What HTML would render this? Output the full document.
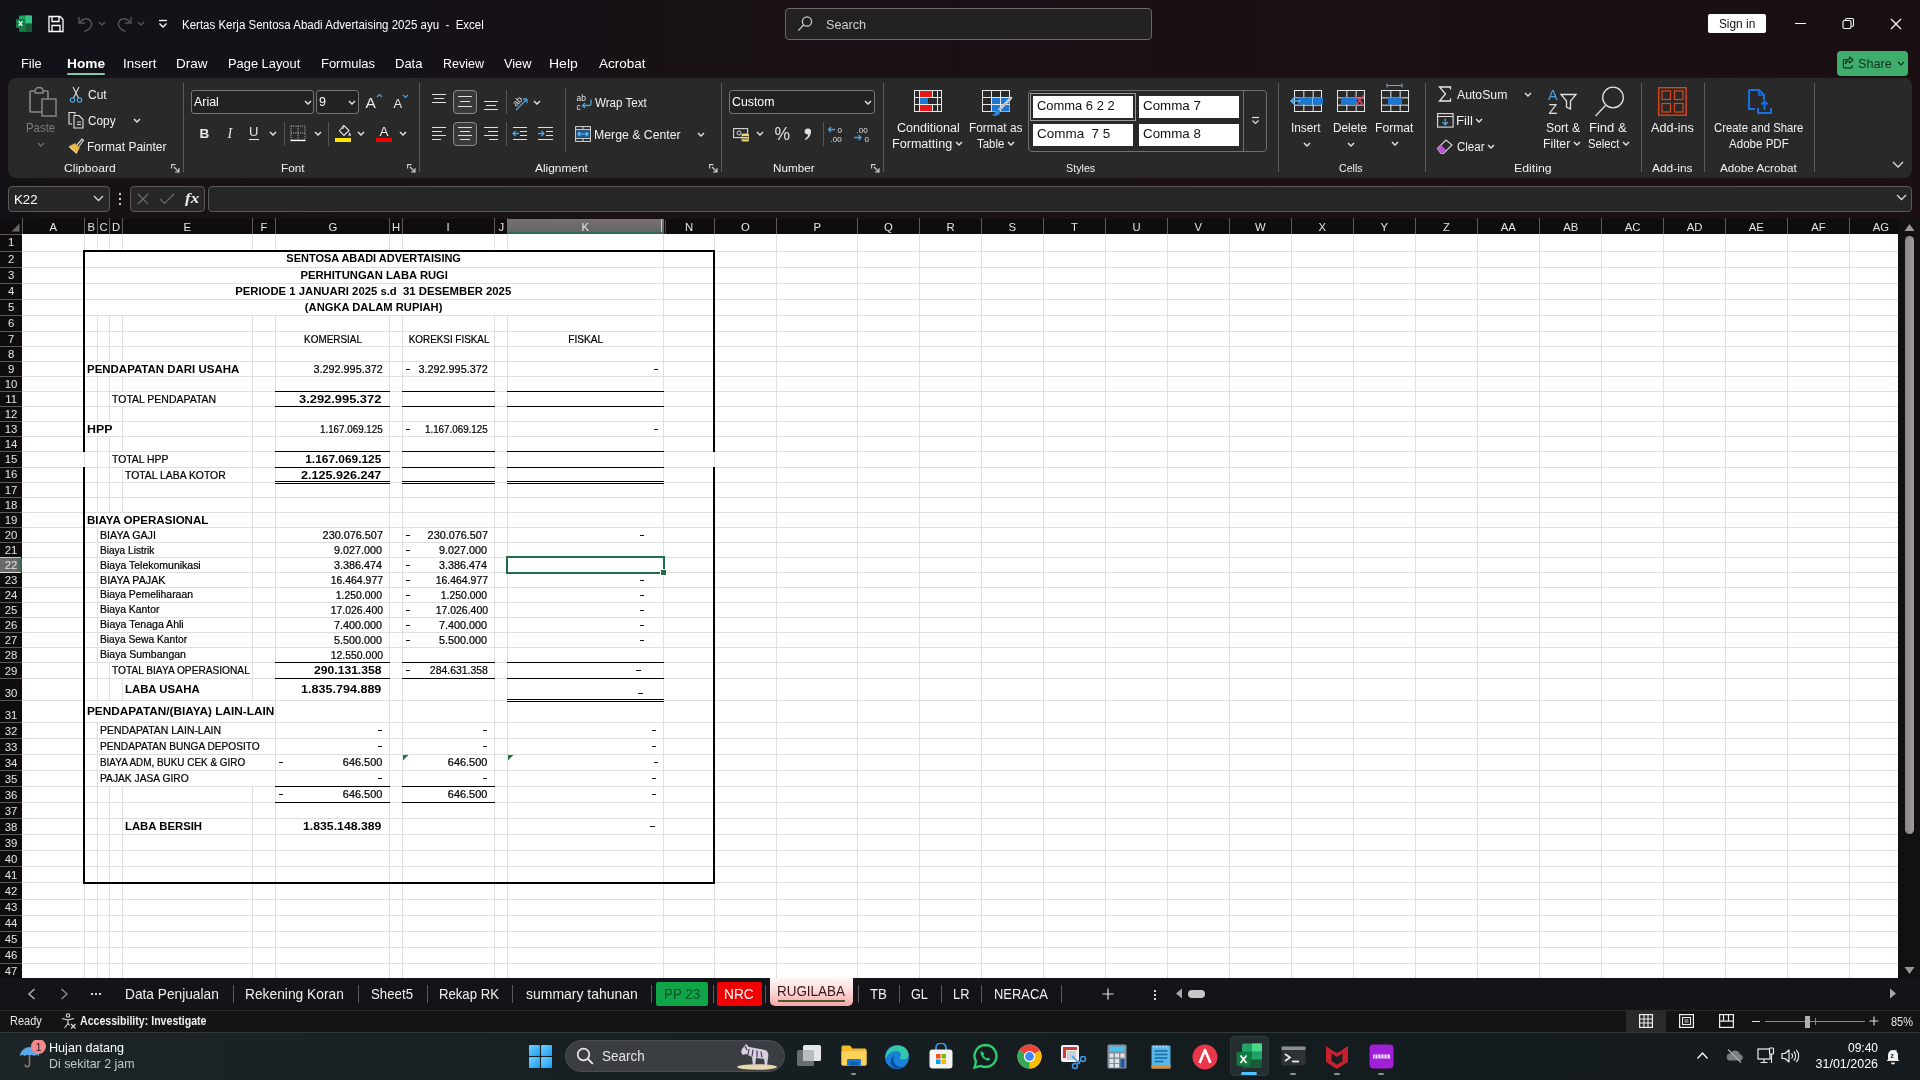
<!DOCTYPE html><html><head><meta charset="utf-8"><title>Excel</title><style>

html,body{margin:0;padding:0}
body{width:1920px;height:1080px;overflow:hidden;position:relative;background:#151217;font-family:"Liberation Sans",sans-serif}
#r{position:absolute;left:0;top:0;width:1920px;height:1080px;will-change:transform;transform:translateZ(0)}
#r div,#r svg,#r span{position:absolute}
#r span{white-space:pre;font-family:"Liberation Sans",sans-serif}
#r span.b{font-weight:bold}
#r span.i{font-style:italic}
#r span.s{font-family:"Liberation Serif",serif}

</style></head><body><div id="r">
<div style="left:0px;top:0px;width:1920px;height:80px;background:linear-gradient(90deg,#111217 0%,#131217 15%,#191116 40%,#1b1014 70%,#190f13 100%);"></div>
<div style="left:0px;top:80px;width:1920px;height:154px;background:linear-gradient(90deg,#141116 0%,#181114 12%,#1a1115 50%,#1a1014 100%);"></div>
<svg style="left:16px;top:15px;" width="16" height="17" viewBox="0 0 16 17"><rect x="3" y="0.5" width="13" height="16" rx="1.5" fill="#21a366"/><rect x="9.5" y="0.5" width="6.5" height="8" fill="#33c481"/><rect x="3" y="8.5" width="6.5" height="8" fill="#107c41"/><rect x="9.5" y="8.5" width="6.5" height="8" fill="#185c37"/><rect x="0" y="4" width="9" height="9" rx="1" fill="#107c41"/><path d="M2.6 6.2l3.8 4.6M6.4 6.2l-3.8 4.6" stroke="#fff" stroke-width="1.3"/></svg>
<svg style="left:47px;top:15px;" width="18" height="18" viewBox="0 0 18 18"><path d="M2 1.5h11l3 3V16.5H2z" fill="none" stroke="#fff" stroke-width="1.3"/><path d="M5 1.5v5h7v-5M5 16.5v-6h8v6" fill="none" stroke="#fff" stroke-width="1.3"/></svg>
<svg style="left:77px;top:15px;" width="18" height="18" viewBox="0 0 18 18"><path d="M2 2v6h6" fill="none" stroke="#555356" stroke-width="1.4"/><path d="M2.5 8c2-4 8-6 11-2s0 8-6 10.5" fill="none" stroke="#555356" stroke-width="1.4"/></svg>
<svg style="left:98px;top:21px;" width="8" height="6" viewBox="0 0 8 6"><path d="M1 1l3 3 3-3" fill="none" stroke="#555356" stroke-width="1.3"/></svg>
<svg style="left:115px;top:15px;" width="18" height="18" viewBox="0 0 18 18"><path d="M16 2v6h-6" fill="none" stroke="#555356" stroke-width="1.4"/><path d="M15.5 8c-2-4-8-6-11-2s0 8 6 10.5" fill="none" stroke="#555356" stroke-width="1.4"/></svg>
<svg style="left:137px;top:21px;" width="8" height="6" viewBox="0 0 8 6"><path d="M1 1l3 3 3-3" fill="none" stroke="#555356" stroke-width="1.3"/></svg>
<svg style="left:158px;top:19px;" width="10" height="10" viewBox="0 0 10 10"><path d="M1 1.5h8" stroke="#fff" stroke-width="1.3"/><path d="M1.5 4.5l3.5 3.5 3.5-3.5" fill="none" stroke="#fff" stroke-width="1.3"/></svg>
<div style="left:784.5px;top:8px;width:367px;height:32px;background:#222021;border:1px solid #6b6768;border-radius:4px;box-sizing:border-box"></div>
<svg style="left:797px;top:15px;" width="16" height="17" viewBox="0 0 16 17"><circle cx="10" cy="6.5" r="4.6" fill="none" stroke="#c8c8c8" stroke-width="1.3"/><path d="M6.6 10L1.3 15.6" stroke="#c8c8c8" stroke-width="1.3"/></svg>
<div style="left:1708px;top:14px;width:58px;height:19px;background:#fff;border-radius:2px"></div>
<div style="left:1795px;top:23px;width:11px;height:1px;background:#fff;"></div>
<svg style="left:1842px;top:17px;" width="13" height="13" viewBox="0 0 13 13"><rect x="1" y="3.5" width="8" height="8" rx="1.5" fill="none" stroke="#fff" stroke-width="1.1"/><path d="M3.5 3.5V3a1.5 1.5 0 0 1 1.5-1.5h5A1.5 1.5 0 0 1 11.5 3v5A1.5 1.5 0 0 1 10 9.5h-.5" fill="none" stroke="#fff" stroke-width="1.1"/></svg>
<svg style="left:1890px;top:18px;" width="12" height="12" viewBox="0 0 12 12"><path d="M1 1l10 10M11 1L1 11" stroke="#fff" stroke-width="1.2"/></svg>
<div style="left:67px;top:72.5px;width:37.5px;height:2px;background:#86c8a8;border-radius:1px"></div>
<div style="left:1837px;top:51px;width:71px;height:24.5px;background:#3fae6c;border-radius:4px"></div>
<svg style="left:1842px;top:56px;" width="12" height="13" viewBox="0 0 12 13"><path d="M4.500 3.500H2.500a1.200 1.200 0 0 0-1.200 1.200v6a1.200 1.200 0 0 0 1.200 1.200h6.500a1.200 1.200 0 0 0 1.200-1.200V9" fill="none" stroke="#10301f" stroke-width="1.100"/><path d="M7.500 1l3.500 3-3.500 3V5.300c-2 0-3.300.800-4.200 2.500.200-2.500 1.700-4.200 4.200-4.600z" fill="none" stroke="#10301f" stroke-width="1.100" stroke-linejoin="round"/></svg>
<svg style="left:1897px;top:60.5px;" width="8" height="6" viewBox="0 0 8 6"><path d="M1 1l3 3 3-3" fill="none" stroke="#10301f" stroke-width="1.2"/></svg>
<div style="left:8px;top:78px;width:1904px;height:100px;background:#292929;border-radius:8px"></div>
<div style="left:182.5px;top:83px;width:1px;height:89px;background:#5a5a5a;"></div>
<div style="left:418.5px;top:83px;width:1px;height:89px;background:#5a5a5a;"></div>
<div style="left:720.5px;top:83px;width:1px;height:89px;background:#5a5a5a;"></div>
<div style="left:882.5px;top:83px;width:1px;height:89px;background:#5a5a5a;"></div>
<div style="left:1277.5px;top:83px;width:1px;height:89px;background:#5a5a5a;"></div>
<div style="left:1424.5px;top:83px;width:1px;height:89px;background:#5a5a5a;"></div>
<div style="left:1640.5px;top:83px;width:1px;height:89px;background:#5a5a5a;"></div>
<div style="left:1703.5px;top:83px;width:1px;height:89px;background:#5a5a5a;"></div>
<div style="left:1813.5px;top:83px;width:1px;height:89px;background:#5a5a5a;"></div>
<svg style="left:28px;top:86px;" width="30" height="34" viewBox="0 0 30 34"><rect x="2" y="5" width="18" height="21" rx="1" fill="none" stroke="#8a8a8a" stroke-width="1.6"/><path d="M7 5c0-2 1.500-3.500 4-3.500S15 3 15 5v2H7z" fill="#292929" stroke="#8a8a8a" stroke-width="1.3"/><rect x="14" y="13" width="14" height="17" fill="#292929" stroke="#8a8a8a" stroke-width="1.4"/></svg>
<svg style="left:36.5px;top:141.5px;" width="8" height="5" viewBox="0 0 8 5"><path d="M1 1l3 3 3-3" fill="none" stroke="#6b6b6b" stroke-width="1.4"/></svg>
<svg style="left:69px;top:86px;" width="14" height="18" viewBox="0 0 14 18"><path d="M4 1l5.500 11M10 1L4.500 12" stroke="#e0e0e0" stroke-width="1.1" fill="none"/><circle cx="3.500" cy="14" r="2.200" fill="none" stroke="#4aa3e0" stroke-width="1.2"/><circle cx="10.500" cy="14" r="2.200" fill="none" stroke="#4aa3e0" stroke-width="1.2"/></svg>
<svg style="left:67px;top:111px;" width="18" height="18" viewBox="0 0 18 18"><path d="M5 13H2V1.500h6l0 2" fill="none" stroke="#e0e0e0" stroke-width="1.1"/><path d="M7 4.500h5l4 4V17H7z" fill="none" stroke="#e0e0e0" stroke-width="1.1"/><path d="M10 11h4M10 13.500h4" stroke="#e0e0e0" stroke-width="1"/></svg>
<svg style="left:132.5px;top:118px;" width="8" height="5" viewBox="0 0 8 5"><path d="M1 1l3 3 3-3" fill="none" stroke="#e6e6e6" stroke-width="1.4"/></svg>
<svg style="left:67px;top:137px;" width="18" height="18" viewBox="0 0 18 18"><path d="M10 8l5-6 1.500 1.200-4.500 6.300" fill="none" stroke="#d8d8d8" stroke-width="1.2"/><path d="M2 9.500l6-3 4.500 4-3 6z" fill="#e8b84a" stroke="#e8b84a" stroke-width="0.6"/><path d="M2 9.500l7.500 7" stroke="#fff" stroke-width="0.8"/></svg>
<svg style="left:171px;top:163.5px;" width="9" height="9" viewBox="0 0 9 9"><path d="M0.6 4.5V0.6h3.9" fill="none" stroke="#d0d0d0" stroke-width="1.1"/><path d="M3 3l5 5M8 4v4H4" fill="none" stroke="#d0d0d0" stroke-width="1.1"/></svg>
<div style="left:191px;top:90px;width:123px;height:24px;background:#222222;border:1px solid #767676;border-radius:3px;box-sizing:border-box"></div>
<div style="left:316px;top:90px;width:43px;height:24px;background:#222222;border:1px solid #767676;border-radius:3px;box-sizing:border-box"></div>
<svg style="left:303.5px;top:99.5px;" width="8" height="5" viewBox="0 0 8 5"><path d="M1 1l3 3 3-3" fill="none" stroke="#e6e6e6" stroke-width="1.4"/></svg>
<svg style="left:348px;top:99.5px;" width="8" height="5" viewBox="0 0 8 5"><path d="M1 1l3 3 3-3" fill="none" stroke="#e6e6e6" stroke-width="1.4"/></svg>
<svg style="left:376px;top:93px;" width="7" height="5" viewBox="0 0 7 5"><path d="M1 4l2.500-2.500L6 4" fill="none" stroke="#4aa3e0" stroke-width="1.2"/></svg>
<svg style="left:402px;top:94px;" width="7" height="5" viewBox="0 0 7 5"><path d="M1 1l2.500 2.500L6 1" fill="none" stroke="#4aa3e0" stroke-width="1.2"/></svg>
<div style="left:249px;top:138.5px;width:10px;height:1px;background:#e8e8e8;"></div>
<svg style="left:269px;top:131px;" width="8" height="5" viewBox="0 0 8 5"><path d="M1 1l3 3 3-3" fill="none" stroke="#e6e6e6" stroke-width="1.4"/></svg>
<div style="left:284px;top:122px;width:1px;height:24px;background:#555;"></div>
<svg style="left:290px;top:125px;" width="16" height="17" viewBox="0 0 16 17"><rect x="1" y="1" width="14" height="14" fill="none" stroke="#bdbdbd" stroke-width="1" stroke-dasharray="1 1.2"/><path d="M8 1v14M1 8h14" stroke="#bdbdbd" stroke-width="1" stroke-dasharray="1 1.2"/><path d="M0.500 15.500h15" stroke="#fff" stroke-width="1.300"/></svg>
<svg style="left:313.5px;top:131px;" width="8" height="5" viewBox="0 0 8 5"><path d="M1 1l3 3 3-3" fill="none" stroke="#e6e6e6" stroke-width="1.4"/></svg>
<div style="left:328px;top:122px;width:1px;height:24px;background:#555;"></div>
<svg style="left:335px;top:124px;" width="17" height="14" viewBox="0 0 17 14"><path d="M5 6l4-4.500 5 5-5 5-4.500-4.500z" fill="none" stroke="#e8e8e8" stroke-width="1.1"/><path d="M8 1.500V5" stroke="#e8e8e8" stroke-width="1.1"/><path d="M14.500 8c1 1.500 1.500 2.300 1.500 3a1.300 1.300 0 0 1-2.600 0c0-.7.400-1.500 1.100-3z" fill="#b8a8e8"/></svg>
<div style="left:335px;top:138px;width:16px;height:4px;background:#ffe800;"></div>
<svg style="left:357px;top:131px;" width="8" height="5" viewBox="0 0 8 5"><path d="M1 1l3 3 3-3" fill="none" stroke="#e6e6e6" stroke-width="1.4"/></svg>
<div style="left:376px;top:138px;width:16px;height:4px;background:#f00000;"></div>
<svg style="left:398.5px;top:131px;" width="8" height="5" viewBox="0 0 8 5"><path d="M1 1l3 3 3-3" fill="none" stroke="#e6e6e6" stroke-width="1.4"/></svg>
<svg style="left:407px;top:163.5px;" width="9" height="9" viewBox="0 0 9 9"><path d="M0.6 4.5V0.6h3.9" fill="none" stroke="#d0d0d0" stroke-width="1.1"/><path d="M3 3l5 5M8 4v4H4" fill="none" stroke="#d0d0d0" stroke-width="1.1"/></svg>
<div style="left:453px;top:90px;width:24px;height:24px;background:#3a3a3a;border:1px solid #8a8a8a;border-radius:4px;box-sizing:border-box"></div>
<div style="left:453px;top:122px;width:24px;height:24px;background:#3a3a3a;border:1px solid #8a8a8a;border-radius:4px;box-sizing:border-box"></div>
<div style="left:432px;top:94px;width:14px;height:1px;background:#e0e0e0;"></div>
<div style="left:434px;top:98px;width:10px;height:1px;background:#e0e0e0;"></div>
<div style="left:432px;top:102px;width:14px;height:1px;background:#e0e0e0;"></div>
<div style="left:458px;top:96px;width:14px;height:1px;background:#e0e0e0;"></div>
<div style="left:460px;top:101px;width:10px;height:1px;background:#e0e0e0;"></div>
<div style="left:458px;top:106px;width:14px;height:1px;background:#e0e0e0;"></div>
<div style="left:484px;top:101px;width:14px;height:1px;background:#e0e0e0;"></div>
<div style="left:486px;top:105px;width:10px;height:1px;background:#e0e0e0;"></div>
<div style="left:484px;top:109px;width:14px;height:1px;background:#e0e0e0;"></div>
<div style="left:432px;top:127px;width:14px;height:1px;background:#e0e0e0;"></div>
<div style="left:432px;top:131px;width:10px;height:1px;background:#e0e0e0;"></div>
<div style="left:432px;top:135px;width:14px;height:1px;background:#e0e0e0;"></div>
<div style="left:432px;top:139px;width:9px;height:1px;background:#e0e0e0;"></div>
<div style="left:458px;top:127px;width:14px;height:1px;background:#e0e0e0;"></div>
<div style="left:460px;top:131px;width:10px;height:1px;background:#e0e0e0;"></div>
<div style="left:458px;top:135px;width:14px;height:1px;background:#e0e0e0;"></div>
<div style="left:460px;top:139px;width:10px;height:1px;background:#e0e0e0;"></div>
<div style="left:484px;top:127px;width:14px;height:1px;background:#e0e0e0;"></div>
<div style="left:488px;top:131px;width:10px;height:1px;background:#e0e0e0;"></div>
<div style="left:484px;top:135px;width:14px;height:1px;background:#e0e0e0;"></div>
<div style="left:489px;top:139px;width:9px;height:1px;background:#e0e0e0;"></div>
<div style="left:505.5px;top:90px;width:1px;height:24px;background:#555;"></div>
<div style="left:505.5px;top:122px;width:1px;height:24px;background:#555;"></div>
<div style="left:564.5px;top:88px;width:1px;height:64px;background:#555;"></div>
<svg style="left:511px;top:92px;" width="20" height="20" viewBox="0 0 20 20"><text x="2" y="12" font-family="Liberation Sans" font-size="9" fill="#e0e0e0" transform="rotate(-45 7 10)">ab</text><path d="M5 18L16 7M16 7h-4M16 7v4" stroke="#4aa3e0" stroke-width="1.3" fill="none"/></svg>
<svg style="left:532.5px;top:99.5px;" width="8" height="5" viewBox="0 0 8 5"><path d="M1 1l3 3 3-3" fill="none" stroke="#e6e6e6" stroke-width="1.4"/></svg>
<div style="left:512.5px;top:127px;width:14px;height:1px;background:#e0e0e0;"></div>
<div style="left:519.5px;top:131px;width:7px;height:1px;background:#e0e0e0;"></div>
<div style="left:519.5px;top:135px;width:7px;height:1px;background:#e0e0e0;"></div>
<div style="left:512.5px;top:139px;width:14px;height:1px;background:#e0e0e0;"></div>
<svg style="left:512px;top:130px;" width="8" height="7" viewBox="0 0 8 7"><path d="M7 3.500H1M3.500 1L1 3.500 3.500 6" stroke="#4aa3e0" stroke-width="1.3" fill="none"/></svg>
<div style="left:538px;top:127px;width:15px;height:1px;background:#e0e0e0;"></div>
<div style="left:546px;top:131px;width:7px;height:1px;background:#e0e0e0;"></div>
<div style="left:546px;top:135px;width:7px;height:1px;background:#e0e0e0;"></div>
<div style="left:538px;top:139px;width:15px;height:1px;background:#e0e0e0;"></div>
<svg style="left:538px;top:130px;" width="8" height="7" viewBox="0 0 8 7"><path d="M0 3.500h6M3.500 1L6 3.500 3.500 6" stroke="#4aa3e0" stroke-width="1.3" fill="none"/></svg>
<svg style="left:576px;top:94px;" width="17" height="17" viewBox="0 0 17 17"><text x="0.500" y="7" font-family="Liberation Sans" font-size="8.500" fill="#e0e0e0">ab</text><text x="0.500" y="15.500" font-family="Liberation Sans" font-size="8.500" fill="#e0e0e0">c</text><path d="M15 5.500v4.500a1.500 1.500 0 0 1-1.500 1.500H6.500M9 9l-2.500 2.500L9 14" fill="none" stroke="#4aa3e0" stroke-width="1.3"/></svg>
<svg style="left:574.5px;top:126px;" width="16" height="16" viewBox="0 0 16 16"><rect x="0.600" y="0.600" width="14.800" height="14.800" fill="none" stroke="#d8d8d8" stroke-width="1"/><path d="M8 0.600v3M8 12.400v3M0.600 3.600h14.800M0.600 12.400h14.800" stroke="#d8d8d8" stroke-width="1"/><rect x="1.200" y="4.200" width="13.600" height="7.600" fill="#1e5a8a"/><path d="M3 8h10M5 6L3 8l2 2M11 6l2 2-2 2" stroke="#6cc0ff" stroke-width="1.100" fill="none"/></svg>
<svg style="left:696.5px;top:131.5px;" width="8" height="5" viewBox="0 0 8 5"><path d="M1 1l3 3 3-3" fill="none" stroke="#e6e6e6" stroke-width="1.4"/></svg>
<svg style="left:709px;top:163.5px;" width="9" height="9" viewBox="0 0 9 9"><path d="M0.6 4.5V0.6h3.9" fill="none" stroke="#d0d0d0" stroke-width="1.1"/><path d="M3 3l5 5M8 4v4H4" fill="none" stroke="#d0d0d0" stroke-width="1.1"/></svg>
<div style="left:729px;top:90px;width:146px;height:24px;background:#222222;border:1px solid #767676;border-radius:3px;box-sizing:border-box"></div>
<svg style="left:864px;top:99.5px;" width="8" height="5" viewBox="0 0 8 5"><path d="M1 1l3 3 3-3" fill="none" stroke="#e6e6e6" stroke-width="1.4"/></svg>
<svg style="left:733px;top:128px;" width="17" height="14" viewBox="0 0 17 14"><rect x="0.600" y="0.600" width="14" height="9" fill="none" stroke="#d8d8d8" stroke-width="1.100"/><circle cx="6" cy="5" r="2" fill="none" stroke="#d8d8d8" stroke-width="1"/><rect x="8.500" y="5.500" width="7.500" height="8" rx="1.500" fill="#e8d27a"/><path d="M9 8.500h6.500M9 11h6.500" stroke="#292929" stroke-width="0.800"/></svg>
<svg style="left:755.5px;top:131px;" width="8" height="5" viewBox="0 0 8 5"><path d="M1 1l3 3 3-3" fill="none" stroke="#e6e6e6" stroke-width="1.4"/></svg>
<svg style="left:803px;top:127px;" width="10" height="15" viewBox="0 0 10 15"><path d="M5 1.500a3 3 0 0 1 3 3.200c0 3.600-2 6.300-5.500 8.300l-.700-1c2-1.300 3.200-2.800 3.500-4.600A3 3 0 1 1 5 1.500z" fill="#e0e0e0"/></svg>
<div style="left:822.5px;top:122px;width:1px;height:24px;background:#555;"></div>
<svg style="left:827px;top:125px;" width="18" height="18" viewBox="0 0 18 18"><path d="M8 4.500H1.500M4 2L1.500 4.500 4 7" stroke="#4aa3e0" stroke-width="1.300" fill="none"/><text x="10.500" y="8" font-family="Liberation Sans" font-size="8" fill="#e0e0e0">0</text><text x="3.500" y="16.500" font-family="Liberation Sans" font-size="8" fill="#e0e0e0">.00</text></svg>
<svg style="left:852px;top:125px;" width="19" height="18" viewBox="0 0 19 18"><text x="4.500" y="8" font-family="Liberation Sans" font-size="8" fill="#e0e0e0">.00</text><path d="M2 12.500h7M6.500 10L9 12.500 6.500 15" stroke="#4aa3e0" stroke-width="1.300" fill="none"/><text x="12.500" y="16.500" font-family="Liberation Sans" font-size="8" fill="#e0e0e0">0</text></svg>
<svg style="left:871px;top:163.5px;" width="9" height="9" viewBox="0 0 9 9"><path d="M0.6 4.5V0.6h3.9" fill="none" stroke="#d0d0d0" stroke-width="1.1"/><path d="M3 3l5 5M8 4v4H4" fill="none" stroke="#d0d0d0" stroke-width="1.1"/></svg>
<svg style="left:914px;top:90px;" width="28" height="22" viewBox="0 0 28 22"><rect x="0.500" y="0.500" width="27" height="21" fill="#292929" stroke="#e8e8e8" stroke-width="1"/><rect x="6" y="1" width="12" height="6" fill="#e81818"/><rect x="6" y="8" width="8" height="6" fill="#1a78d0"/><rect x="6" y="15" width="13" height="6" fill="#e81818"/><path d="M5.500 0.500v21M18.500 0.500v7M18.500 14.500v7M23.500 0.500v21M0.500 7.500h27M0.500 14.500h27" stroke="#e8e8e8" stroke-width="1" fill="none"/></svg>
<svg style="left:954.5px;top:141px;" width="8" height="5" viewBox="0 0 8 5"><path d="M1 1l3 3 3-3" fill="none" stroke="#e6e6e6" stroke-width="1.4"/></svg>
<svg style="left:982px;top:90px;" width="32" height="30" viewBox="0 0 32 30"><rect x="0.500" y="0.500" width="27" height="21" fill="#292929" stroke="#e8e8e8" stroke-width="1"/><rect x="9.500" y="7.500" width="18" height="14" fill="#1a78d0"/><path d="M9.500 0.500v21M18.500 0.500v21M0.500 7.500h27M0.500 14.500h27" stroke="#e8e8e8" stroke-width="1" fill="none"/><path d="M29 8L17 20" stroke="#c8c8c8" stroke-width="2.600" stroke-linecap="round"/><path d="M17.500 19.500c-2.500-.5-4 1-4.500 3-.600 1.500-2 2.500-3.500 2.500 3 1.500 8.500 1 8.500-3.500z" fill="#2a8ae0"/></svg>
<svg style="left:1006.8px;top:141px;" width="8" height="5" viewBox="0 0 8 5"><path d="M1 1l3 3 3-3" fill="none" stroke="#e6e6e6" stroke-width="1.4"/></svg>
<div style="left:1028px;top:90px;width:239px;height:62px;background:transparent;border:1px solid #6e6e6e;border-radius:4px;box-sizing:border-box"></div>
<div style="left:1243px;top:90px;width:1px;height:62px;background:#6e6e6e;"></div>
<div style="left:1030px;top:93px;width:105.5px;height:27.5px;background:transparent;border:1px solid #9a9a9a;box-sizing:border-box"></div>
<div style="left:1033px;top:96px;width:100px;height:22px;background:#fff;"></div>
<div style="left:1139px;top:96px;width:100px;height:22px;background:#fff;"></div>
<div style="left:1033px;top:124px;width:100px;height:22px;background:#fff;"></div>
<div style="left:1139px;top:124px;width:100px;height:22px;background:#fff;"></div>
<svg style="left:1250.5px;top:116px;" width="9" height="9" viewBox="0 0 9 9"><path d="M1 1.500h7" stroke="#e0e0e0" stroke-width="1.200"/><path d="M1.500 4.500l3 3 3-3" fill="none" stroke="#e0e0e0" stroke-width="1.200"/></svg>
<svg style="left:1289px;top:88px;" width="36" height="26" viewBox="0 0 36 26"><rect x="5.5" y="2.5" width="27" height="21" fill="none" stroke="#e8e8e8" stroke-width="1"/><path d="M14.8333 2v22 M24.1667 2v22 M5 9.83333h28 M5 17.1667h28" stroke="#e8e8e8" stroke-width="1" fill="none"/><rect x="9" y="9.500" width="25" height="7" fill="#1a78d0"/><path d="M12 13H2.500M6.500 8.500L2 13l4.500 4.500" stroke="#5ab0f0" stroke-width="1.500" fill="none"/><path d="M23.500 9.500v7" stroke="#6cc0ff" stroke-width="1"/></svg>
<svg style="left:1335px;top:88px;" width="36" height="26" viewBox="0 0 36 26"><rect x="2.5" y="2.5" width="27" height="21" fill="none" stroke="#e8e8e8" stroke-width="1"/><path d="M11.8333 2v22 M21.1667 2v22 M2 9.83333h28 M2 17.1667h28" stroke="#e8e8e8" stroke-width="1" fill="none"/><rect x="6" y="9.500" width="16" height="7" fill="#1a78d0"/><path d="M20 7l9 11M29 7l-9 11" stroke="#e0405a" stroke-width="1.500" fill="none"/></svg>
<svg style="left:1379px;top:82px;" width="32" height="32" viewBox="0 0 32 32"><rect x="2.5" y="8.5" width="27" height="21" fill="none" stroke="#e8e8e8" stroke-width="1"/><path d="M11.8333 8v22 M21.1667 8v22 M2 15.8333h28 M2 23.1667h28" stroke="#e8e8e8" stroke-width="1" fill="none"/><rect x="9" y="15.500" width="14" height="7" fill="#1a78d0"/><path d="M8 3.500h15M8 1.500v4M23 1.500v4" stroke="#5ab0f0" stroke-width="1" fill="none"/></svg>
<svg style="left:1302.5px;top:141.5px;" width="8" height="5" viewBox="0 0 8 5"><path d="M1 1l3 3 3-3" fill="none" stroke="#e6e6e6" stroke-width="1.4"/></svg>
<svg style="left:1346.5px;top:141.5px;" width="8" height="5" viewBox="0 0 8 5"><path d="M1 1l3 3 3-3" fill="none" stroke="#e6e6e6" stroke-width="1.4"/></svg>
<svg style="left:1390.5px;top:140.5px;" width="8" height="5" viewBox="0 0 8 5"><path d="M1 1l3 3 3-3" fill="none" stroke="#e6e6e6" stroke-width="1.4"/></svg>
<svg style="left:1438px;top:86px;" width="14" height="16" viewBox="0 0 14 16"><path d="M12.500 3.500V1H1.500l6 7-6 7h11v-2.500" fill="none" stroke="#e8e8e8" stroke-width="1.300"/></svg>
<svg style="left:1523.5px;top:91.5px;" width="8" height="5" viewBox="0 0 8 5"><path d="M1 1l3 3 3-3" fill="none" stroke="#e6e6e6" stroke-width="1.4"/></svg>
<svg style="left:1437px;top:113px;" width="17" height="15" viewBox="0 0 17 15"><rect x="0.600" y="0.600" width="15.500" height="13.500" fill="none" stroke="#e0e0e0" stroke-width="1.100"/><path d="M0.600 3.500h15.500" stroke="#e0e0e0" stroke-width="1"/><path d="M8.300 5.500v6M5.500 9l2.800 2.800L11 9" stroke="#4aa3e0" stroke-width="1.300" fill="none"/></svg>
<svg style="left:1474.5px;top:118px;" width="8" height="5" viewBox="0 0 8 5"><path d="M1 1l3 3 3-3" fill="none" stroke="#e6e6e6" stroke-width="1.4"/></svg>
<svg style="left:1436px;top:138px;" width="18" height="17" viewBox="0 0 18 17"><path d="M1.500 10.500L10 2l6 5-8.500 8.500H5z" fill="none" stroke="#d8d8d8" stroke-width="1.100"/><path d="M1.500 10.500l3.500-3.500 5 5-3 3.500H5z" fill="#c050d8"/></svg>
<svg style="left:1486.5px;top:144px;" width="8" height="5" viewBox="0 0 8 5"><path d="M1 1l3 3 3-3" fill="none" stroke="#e6e6e6" stroke-width="1.4"/></svg>
<svg style="left:1560px;top:93px;" width="18" height="18" viewBox="0 0 18 18"><path d="M1 1.500h15l-5.500 6.500v8l-4 -2v-6z" fill="none" stroke="#e0e0e0" stroke-width="1.300"/></svg>
<svg style="left:1573px;top:141px;" width="8" height="5" viewBox="0 0 8 5"><path d="M1 1l3 3 3-3" fill="none" stroke="#e6e6e6" stroke-width="1.4"/></svg>
<svg style="left:1593.5px;top:86px;" width="32" height="32" viewBox="0 0 32 32"><circle cx="19" cy="11.500" r="10.300" fill="none" stroke="#e0e0e0" stroke-width="1.300"/><path d="M11.500 19.500L1.500 30" stroke="#e0e0e0" stroke-width="1.300"/></svg>
<svg style="left:1621.5px;top:141px;" width="8" height="5" viewBox="0 0 8 5"><path d="M1 1l3 3 3-3" fill="none" stroke="#e6e6e6" stroke-width="1.4"/></svg>
<svg style="left:1658px;top:87px;" width="29" height="29" viewBox="0 0 29 29"><rect x="0.700" y="0.700" width="27.500" height="27.500" fill="none" stroke="#d8481c" stroke-width="1.400"/><rect x="4" y="4" width="8.500" height="8.500" fill="none" stroke="#d8481c" stroke-width="1.200"/><rect x="16.500" y="4" width="8.500" height="8.500" fill="none" stroke="#d8481c" stroke-width="1.200"/><rect x="4" y="16.500" width="8.500" height="8.500" fill="none" stroke="#d8481c" stroke-width="1.200"/><rect x="16.500" y="16.500" width="8.500" height="8.500" fill="none" stroke="#d8481c" stroke-width="1.200"/></svg>
<svg style="left:1747px;top:88px;" width="27" height="28" viewBox="0 0 27 28"><path d="M2 2h10l5 5v5M2 2v19h6" fill="none" stroke="#1a6fe0" stroke-width="2"/><path d="M12 2v5h5" fill="none" stroke="#1a6fe0" stroke-width="1.600"/><path d="M11 20v5h13v-5M17.500 22v-8M14.500 16.500l3-3 3 3" fill="none" stroke="#1a6fe0" stroke-width="2"/></svg>
<svg style="left:1892px;top:161px;" width="12" height="7" viewBox="0 0 12 7"><path d="M1 1l5 5 5-5" fill="none" stroke="#e0e0e0" stroke-width="1.300"/></svg>
<div style="left:8px;top:186px;width:101.5px;height:26px;background:#262626;border:1px solid #5c5859;border-radius:4px;box-sizing:border-box"></div>
<svg style="left:93px;top:195px;" width="12" height="8" viewBox="0 0 12 8"><path d="M1 1l4.500 4.500L10 1" fill="none" stroke="#d8d8d8" stroke-width="1.300"/></svg>
<div style="left:119px;top:192.5px;width:2px;height:2px;background:#d0d0d0;"></div>
<div style="left:119px;top:197.5px;width:2px;height:2px;background:#d0d0d0;"></div>
<div style="left:119px;top:202.5px;width:2px;height:2px;background:#d0d0d0;"></div>
<div style="left:130px;top:186px;width:74.5px;height:26px;background:#262626;border:1px solid #5c5859;border-radius:4px;box-sizing:border-box"></div>
<svg style="left:137px;top:193px;" width="12" height="12" viewBox="0 0 12 12"><path d="M1 1l10 10M11 1L1 11" stroke="#6a6a6a" stroke-width="1.200"/></svg>
<svg style="left:159px;top:193px;" width="16" height="12" viewBox="0 0 16 12"><path d="M1 6l4.500 4.500L15 1" fill="none" stroke="#6a6a6a" stroke-width="1.200"/></svg>
<div style="left:208px;top:186px;width:1704px;height:26px;background:#262626;border:1px solid #5c5859;border-radius:4px;box-sizing:border-box"></div>
<svg style="left:1896px;top:194px;" width="12" height="8" viewBox="0 0 12 8"><path d="M1 1l4.500 4.500L10 1" fill="none" stroke="#d8d8d8" stroke-width="1.300"/></svg>
<div style="left:0px;top:219px;width:1920px;height:15px;background:#0e0c0c;"></div>
<div style="left:0px;top:234px;width:22px;height:744px;background:#0e0c0c;"></div>
<div style="left:22px;top:234px;width:1876px;height:744px;background:#fff;"></div>
<svg style="left:11px;top:223px;" width="9" height="9" viewBox="0 0 9 9"><path d="M8.500 0.500v8h-8z" fill="#6a6666"/></svg>
<div style="left:22px;top:218px;width:1px;height:16px;background:#5e5a5a;"></div>
<div style="left:0px;top:234px;width:22px;height:1px;background:#5e5a5a;"></div>
<div style="left:84px;top:218px;width:1px;height:16px;background:#5e5a5a;"></div>
<div style="left:97px;top:218px;width:1px;height:16px;background:#5e5a5a;"></div>
<div style="left:109px;top:218px;width:1px;height:16px;background:#5e5a5a;"></div>
<div style="left:122px;top:218px;width:1px;height:16px;background:#5e5a5a;"></div>
<div style="left:252px;top:218px;width:1px;height:16px;background:#5e5a5a;"></div>
<div style="left:275px;top:218px;width:1px;height:16px;background:#5e5a5a;"></div>
<div style="left:389px;top:218px;width:1px;height:16px;background:#5e5a5a;"></div>
<div style="left:402px;top:218px;width:1px;height:16px;background:#5e5a5a;"></div>
<div style="left:494px;top:218px;width:1px;height:16px;background:#5e5a5a;"></div>
<div style="left:507px;top:218px;width:1px;height:16px;background:#5e5a5a;"></div>
<div style="left:507px;top:219px;width:157px;height:15px;background:linear-gradient(180deg,#777071 0%,#6d6a6a 55%,#5c6661 100%);"></div>
<div style="left:507px;top:232px;width:157px;height:2px;background:#356a52;"></div>
<div style="left:661px;top:219px;width:1px;height:13px;background:#cfcaca;"></div>
<div style="left:665px;top:220px;width:1px;height:14px;background:#4e4a4a;"></div>
<div style="left:714px;top:218px;width:1px;height:16px;background:#5e5a5a;"></div>
<div style="left:776px;top:218px;width:1px;height:16px;background:#5e5a5a;"></div>
<div style="left:857px;top:218px;width:1px;height:16px;background:#5e5a5a;"></div>
<div style="left:919px;top:218px;width:1px;height:16px;background:#5e5a5a;"></div>
<div style="left:981px;top:218px;width:1px;height:16px;background:#5e5a5a;"></div>
<div style="left:1043px;top:218px;width:1px;height:16px;background:#5e5a5a;"></div>
<div style="left:1105px;top:218px;width:1px;height:16px;background:#5e5a5a;"></div>
<div style="left:1167px;top:218px;width:1px;height:16px;background:#5e5a5a;"></div>
<div style="left:1229px;top:218px;width:1px;height:16px;background:#5e5a5a;"></div>
<div style="left:1291px;top:218px;width:1px;height:16px;background:#5e5a5a;"></div>
<div style="left:1353px;top:218px;width:1px;height:16px;background:#5e5a5a;"></div>
<div style="left:1415px;top:218px;width:1px;height:16px;background:#5e5a5a;"></div>
<div style="left:1477px;top:218px;width:1px;height:16px;background:#5e5a5a;"></div>
<div style="left:1539px;top:218px;width:1px;height:16px;background:#5e5a5a;"></div>
<div style="left:1601px;top:218px;width:1px;height:16px;background:#5e5a5a;"></div>
<div style="left:1663px;top:218px;width:1px;height:16px;background:#5e5a5a;"></div>
<div style="left:1725px;top:218px;width:1px;height:16px;background:#5e5a5a;"></div>
<div style="left:1787px;top:218px;width:1px;height:16px;background:#5e5a5a;"></div>
<div style="left:1849px;top:218px;width:1px;height:16px;background:#5e5a5a;"></div>
<div style="left:0px;top:251px;width:22px;height:1px;background:#5e5a5a;"></div>
<div style="left:0px;top:267px;width:22px;height:1px;background:#5e5a5a;"></div>
<div style="left:0px;top:283px;width:22px;height:1px;background:#5e5a5a;"></div>
<div style="left:0px;top:299px;width:22px;height:1px;background:#5e5a5a;"></div>
<div style="left:0px;top:315px;width:22px;height:1px;background:#5e5a5a;"></div>
<div style="left:0px;top:331px;width:22px;height:1px;background:#5e5a5a;"></div>
<div style="left:0px;top:346px;width:22px;height:1px;background:#5e5a5a;"></div>
<div style="left:0px;top:361px;width:22px;height:1px;background:#5e5a5a;"></div>
<div style="left:0px;top:376px;width:22px;height:1px;background:#5e5a5a;"></div>
<div style="left:0px;top:391px;width:22px;height:1px;background:#5e5a5a;"></div>
<div style="left:0px;top:406px;width:22px;height:1px;background:#5e5a5a;"></div>
<div style="left:0px;top:421px;width:22px;height:1px;background:#5e5a5a;"></div>
<div style="left:0px;top:436px;width:22px;height:1px;background:#5e5a5a;"></div>
<div style="left:0px;top:451px;width:22px;height:1px;background:#5e5a5a;"></div>
<div style="left:0px;top:467px;width:22px;height:1px;background:#5e5a5a;"></div>
<div style="left:0px;top:482px;width:22px;height:1px;background:#5e5a5a;"></div>
<div style="left:0px;top:497px;width:22px;height:1px;background:#5e5a5a;"></div>
<div style="left:0px;top:512px;width:22px;height:1px;background:#5e5a5a;"></div>
<div style="left:0px;top:527px;width:22px;height:1px;background:#5e5a5a;"></div>
<div style="left:0px;top:542px;width:22px;height:1px;background:#5e5a5a;"></div>
<div style="left:0px;top:558px;width:22px;height:14px;background:linear-gradient(90deg,#6b6868 0%,#6b6868 78%,#3f6a55 90%,#2f6048 100%);"></div>
<div style="left:0px;top:557px;width:21px;height:1px;background:#cac6c6;"></div>
<div style="left:0px;top:572px;width:21px;height:1px;background:#dedada;"></div>
<div style="left:0px;top:587px;width:22px;height:1px;background:#5e5a5a;"></div>
<div style="left:0px;top:602px;width:22px;height:1px;background:#5e5a5a;"></div>
<div style="left:0px;top:617px;width:22px;height:1px;background:#5e5a5a;"></div>
<div style="left:0px;top:632px;width:22px;height:1px;background:#5e5a5a;"></div>
<div style="left:0px;top:647px;width:22px;height:1px;background:#5e5a5a;"></div>
<div style="left:0px;top:662px;width:22px;height:1px;background:#5e5a5a;"></div>
<div style="left:0px;top:678px;width:22px;height:1px;background:#5e5a5a;"></div>
<div style="left:0px;top:700px;width:22px;height:1px;background:#5e5a5a;"></div>
<div style="left:0px;top:722px;width:22px;height:1px;background:#5e5a5a;"></div>
<div style="left:0px;top:738px;width:22px;height:1px;background:#5e5a5a;"></div>
<div style="left:0px;top:754px;width:22px;height:1px;background:#5e5a5a;"></div>
<div style="left:0px;top:770px;width:22px;height:1px;background:#5e5a5a;"></div>
<div style="left:0px;top:786px;width:22px;height:1px;background:#5e5a5a;"></div>
<div style="left:0px;top:802px;width:22px;height:1px;background:#5e5a5a;"></div>
<div style="left:0px;top:818px;width:22px;height:1px;background:#5e5a5a;"></div>
<div style="left:0px;top:834px;width:22px;height:1px;background:#5e5a5a;"></div>
<div style="left:0px;top:850px;width:22px;height:1px;background:#5e5a5a;"></div>
<div style="left:0px;top:866px;width:22px;height:1px;background:#5e5a5a;"></div>
<div style="left:0px;top:882px;width:22px;height:1px;background:#5e5a5a;"></div>
<div style="left:0px;top:899px;width:22px;height:1px;background:#5e5a5a;"></div>
<div style="left:0px;top:915px;width:22px;height:1px;background:#5e5a5a;"></div>
<div style="left:0px;top:931px;width:22px;height:1px;background:#5e5a5a;"></div>
<div style="left:0px;top:947px;width:22px;height:1px;background:#5e5a5a;"></div>
<div style="left:0px;top:963px;width:22px;height:1px;background:#5e5a5a;"></div>
<div style="left:22px;top:251px;width:1876px;height:1px;background:#dfdfdf;"></div>
<div style="left:22px;top:267px;width:1876px;height:1px;background:#dfdfdf;"></div>
<div style="left:22px;top:283px;width:1876px;height:1px;background:#dfdfdf;"></div>
<div style="left:22px;top:299px;width:1876px;height:1px;background:#dfdfdf;"></div>
<div style="left:22px;top:315px;width:1876px;height:1px;background:#dfdfdf;"></div>
<div style="left:22px;top:331px;width:1876px;height:1px;background:#dfdfdf;"></div>
<div style="left:22px;top:346px;width:1876px;height:1px;background:#dfdfdf;"></div>
<div style="left:22px;top:361px;width:1876px;height:1px;background:#dfdfdf;"></div>
<div style="left:22px;top:376px;width:1876px;height:1px;background:#dfdfdf;"></div>
<div style="left:22px;top:391px;width:1876px;height:1px;background:#dfdfdf;"></div>
<div style="left:22px;top:406px;width:1876px;height:1px;background:#dfdfdf;"></div>
<div style="left:22px;top:421px;width:1876px;height:1px;background:#dfdfdf;"></div>
<div style="left:22px;top:436px;width:1876px;height:1px;background:#dfdfdf;"></div>
<div style="left:22px;top:451px;width:1876px;height:1px;background:#dfdfdf;"></div>
<div style="left:22px;top:467px;width:1876px;height:1px;background:#dfdfdf;"></div>
<div style="left:22px;top:482px;width:1876px;height:1px;background:#dfdfdf;"></div>
<div style="left:22px;top:497px;width:1876px;height:1px;background:#dfdfdf;"></div>
<div style="left:22px;top:512px;width:1876px;height:1px;background:#dfdfdf;"></div>
<div style="left:22px;top:527px;width:1876px;height:1px;background:#dfdfdf;"></div>
<div style="left:22px;top:542px;width:1876px;height:1px;background:#dfdfdf;"></div>
<div style="left:22px;top:557px;width:1876px;height:1px;background:#dfdfdf;"></div>
<div style="left:22px;top:572px;width:1876px;height:1px;background:#dfdfdf;"></div>
<div style="left:22px;top:587px;width:1876px;height:1px;background:#dfdfdf;"></div>
<div style="left:22px;top:602px;width:1876px;height:1px;background:#dfdfdf;"></div>
<div style="left:22px;top:617px;width:1876px;height:1px;background:#dfdfdf;"></div>
<div style="left:22px;top:632px;width:1876px;height:1px;background:#dfdfdf;"></div>
<div style="left:22px;top:647px;width:1876px;height:1px;background:#dfdfdf;"></div>
<div style="left:22px;top:662px;width:1876px;height:1px;background:#dfdfdf;"></div>
<div style="left:22px;top:678px;width:1876px;height:1px;background:#dfdfdf;"></div>
<div style="left:22px;top:700px;width:1876px;height:1px;background:#dfdfdf;"></div>
<div style="left:22px;top:722px;width:1876px;height:1px;background:#dfdfdf;"></div>
<div style="left:22px;top:738px;width:1876px;height:1px;background:#dfdfdf;"></div>
<div style="left:22px;top:754px;width:1876px;height:1px;background:#dfdfdf;"></div>
<div style="left:22px;top:770px;width:1876px;height:1px;background:#dfdfdf;"></div>
<div style="left:22px;top:786px;width:1876px;height:1px;background:#dfdfdf;"></div>
<div style="left:22px;top:802px;width:1876px;height:1px;background:#dfdfdf;"></div>
<div style="left:22px;top:818px;width:1876px;height:1px;background:#dfdfdf;"></div>
<div style="left:22px;top:834px;width:1876px;height:1px;background:#dfdfdf;"></div>
<div style="left:22px;top:850px;width:1876px;height:1px;background:#dfdfdf;"></div>
<div style="left:22px;top:866px;width:1876px;height:1px;background:#dfdfdf;"></div>
<div style="left:22px;top:882px;width:1876px;height:1px;background:#dfdfdf;"></div>
<div style="left:22px;top:899px;width:1876px;height:1px;background:#dfdfdf;"></div>
<div style="left:22px;top:915px;width:1876px;height:1px;background:#dfdfdf;"></div>
<div style="left:22px;top:931px;width:1876px;height:1px;background:#dfdfdf;"></div>
<div style="left:22px;top:947px;width:1876px;height:1px;background:#dfdfdf;"></div>
<div style="left:22px;top:963px;width:1876px;height:1px;background:#dfdfdf;"></div>
<div style="left:84px;top:234px;width:1px;height:744px;background:#dfdfdf;"></div>
<div style="left:97px;top:234px;width:1px;height:17px;background:#dfdfdf;"></div>
<div style="left:97px;top:316px;width:1px;height:45px;background:#dfdfdf;"></div>
<div style="left:97px;top:377px;width:1px;height:44px;background:#dfdfdf;"></div>
<div style="left:97px;top:437px;width:1px;height:75px;background:#dfdfdf;"></div>
<div style="left:97px;top:528px;width:1px;height:172px;background:#dfdfdf;"></div>
<div style="left:97px;top:723px;width:1px;height:255px;background:#dfdfdf;"></div>
<div style="left:109px;top:234px;width:1px;height:17px;background:#dfdfdf;"></div>
<div style="left:109px;top:316px;width:1px;height:45px;background:#dfdfdf;"></div>
<div style="left:109px;top:377px;width:1px;height:44px;background:#dfdfdf;"></div>
<div style="left:109px;top:437px;width:1px;height:75px;background:#dfdfdf;"></div>
<div style="left:109px;top:663px;width:1px;height:37px;background:#dfdfdf;"></div>
<div style="left:109px;top:787px;width:1px;height:191px;background:#dfdfdf;"></div>
<div style="left:122px;top:234px;width:1px;height:17px;background:#dfdfdf;"></div>
<div style="left:122px;top:316px;width:1px;height:45px;background:#dfdfdf;"></div>
<div style="left:122px;top:377px;width:1px;height:14px;background:#dfdfdf;"></div>
<div style="left:122px;top:407px;width:1px;height:44px;background:#dfdfdf;"></div>
<div style="left:122px;top:468px;width:1px;height:44px;background:#dfdfdf;"></div>
<div style="left:122px;top:679px;width:1px;height:21px;background:#dfdfdf;"></div>
<div style="left:122px;top:787px;width:1px;height:191px;background:#dfdfdf;"></div>
<div style="left:252px;top:234px;width:1px;height:17px;background:#dfdfdf;"></div>
<div style="left:252px;top:316px;width:1px;height:384px;background:#dfdfdf;"></div>
<div style="left:252px;top:787px;width:1px;height:191px;background:#dfdfdf;"></div>
<div style="left:275px;top:234px;width:1px;height:17px;background:#dfdfdf;"></div>
<div style="left:275px;top:316px;width:1px;height:662px;background:#dfdfdf;"></div>
<div style="left:389px;top:234px;width:1px;height:17px;background:#dfdfdf;"></div>
<div style="left:389px;top:316px;width:1px;height:662px;background:#dfdfdf;"></div>
<div style="left:402px;top:234px;width:1px;height:17px;background:#dfdfdf;"></div>
<div style="left:402px;top:316px;width:1px;height:662px;background:#dfdfdf;"></div>
<div style="left:494px;top:234px;width:1px;height:17px;background:#dfdfdf;"></div>
<div style="left:494px;top:316px;width:1px;height:662px;background:#dfdfdf;"></div>
<div style="left:507px;top:234px;width:1px;height:17px;background:#dfdfdf;"></div>
<div style="left:507px;top:316px;width:1px;height:662px;background:#dfdfdf;"></div>
<div style="left:663px;top:234px;width:1px;height:744px;background:#dfdfdf;"></div>
<div style="left:714px;top:234px;width:1px;height:744px;background:#dfdfdf;"></div>
<div style="left:776px;top:234px;width:1px;height:744px;background:#dfdfdf;"></div>
<div style="left:857px;top:234px;width:1px;height:744px;background:#dfdfdf;"></div>
<div style="left:919px;top:234px;width:1px;height:744px;background:#dfdfdf;"></div>
<div style="left:981px;top:234px;width:1px;height:744px;background:#dfdfdf;"></div>
<div style="left:1043px;top:234px;width:1px;height:744px;background:#dfdfdf;"></div>
<div style="left:1105px;top:234px;width:1px;height:744px;background:#dfdfdf;"></div>
<div style="left:1167px;top:234px;width:1px;height:744px;background:#dfdfdf;"></div>
<div style="left:1229px;top:234px;width:1px;height:744px;background:#dfdfdf;"></div>
<div style="left:1291px;top:234px;width:1px;height:744px;background:#dfdfdf;"></div>
<div style="left:1353px;top:234px;width:1px;height:744px;background:#dfdfdf;"></div>
<div style="left:1415px;top:234px;width:1px;height:744px;background:#dfdfdf;"></div>
<div style="left:1477px;top:234px;width:1px;height:744px;background:#dfdfdf;"></div>
<div style="left:1539px;top:234px;width:1px;height:744px;background:#dfdfdf;"></div>
<div style="left:1601px;top:234px;width:1px;height:744px;background:#dfdfdf;"></div>
<div style="left:1663px;top:234px;width:1px;height:744px;background:#dfdfdf;"></div>
<div style="left:1725px;top:234px;width:1px;height:744px;background:#dfdfdf;"></div>
<div style="left:1787px;top:234px;width:1px;height:744px;background:#dfdfdf;"></div>
<div style="left:1849px;top:234px;width:1px;height:744px;background:#dfdfdf;"></div>
<div style="left:83px;top:250px;width:632px;height:2px;background:#000;"></div>
<div style="left:83px;top:882px;width:632px;height:2px;background:#000;"></div>
<div style="left:83px;top:250px;width:2px;height:202px;background:#000;"></div>
<div style="left:83px;top:467px;width:2px;height:417px;background:#000;"></div>
<div style="left:713px;top:250px;width:2px;height:202px;background:#000;"></div>
<div style="left:713px;top:467px;width:2px;height:417px;background:#000;"></div>
<div style="left:275px;top:391px;width:115px;height:1px;background:#000;"></div>
<div style="left:275px;top:406px;width:115px;height:1px;background:#000;"></div>
<div style="left:275px;top:451px;width:115px;height:1px;background:#000;"></div>
<div style="left:275px;top:467px;width:115px;height:1px;background:#000;"></div>
<div style="left:275px;top:481px;width:115px;height:1px;background:#000;"></div>
<div style="left:275px;top:483px;width:115px;height:1px;background:#000;"></div>
<div style="left:275px;top:482px;width:115px;height:1px;background:#fff;"></div>
<div style="left:402px;top:391px;width:93px;height:1px;background:#000;"></div>
<div style="left:402px;top:406px;width:93px;height:1px;background:#000;"></div>
<div style="left:402px;top:451px;width:93px;height:1px;background:#000;"></div>
<div style="left:402px;top:467px;width:93px;height:1px;background:#000;"></div>
<div style="left:402px;top:481px;width:93px;height:1px;background:#000;"></div>
<div style="left:402px;top:483px;width:93px;height:1px;background:#000;"></div>
<div style="left:402px;top:482px;width:93px;height:1px;background:#fff;"></div>
<div style="left:507px;top:391px;width:157px;height:1px;background:#000;"></div>
<div style="left:507px;top:406px;width:157px;height:1px;background:#000;"></div>
<div style="left:507px;top:451px;width:157px;height:1px;background:#000;"></div>
<div style="left:507px;top:467px;width:157px;height:1px;background:#000;"></div>
<div style="left:507px;top:481px;width:157px;height:1px;background:#000;"></div>
<div style="left:507px;top:483px;width:157px;height:1px;background:#000;"></div>
<div style="left:507px;top:482px;width:157px;height:1px;background:#fff;"></div>
<div style="left:275px;top:662px;width:115px;height:1px;background:#000;"></div>
<div style="left:275px;top:678px;width:115px;height:1px;background:#000;"></div>
<div style="left:402px;top:662px;width:93px;height:1px;background:#000;"></div>
<div style="left:402px;top:678px;width:93px;height:1px;background:#000;"></div>
<div style="left:507px;top:662px;width:157px;height:1px;background:#000;"></div>
<div style="left:507px;top:678px;width:157px;height:1px;background:#000;"></div>
<div style="left:507px;top:699px;width:157px;height:1px;background:#000;"></div>
<div style="left:507px;top:701px;width:157px;height:1px;background:#000;"></div>
<div style="left:507px;top:700px;width:157px;height:1px;background:#fff;"></div>
<div style="left:275px;top:786px;width:115px;height:1px;background:#000;"></div>
<div style="left:275px;top:802px;width:115px;height:1px;background:#000;"></div>
<div style="left:402px;top:786px;width:93px;height:1px;background:#000;"></div>
<div style="left:402px;top:802px;width:93px;height:1px;background:#000;"></div>
<svg style="left:403px;top:755px;" width="6" height="6" viewBox="0 0 6 6"><path d="M0 0h5.500L0 5.500z" fill="#1e7a3c"/></svg>
<svg style="left:508px;top:755px;" width="6" height="6" viewBox="0 0 6 6"><path d="M0 0h5.500L0 5.500z" fill="#1e7a3c"/></svg>
<div style="left:506px;top:556px;width:159px;height:2px;background:#1e6e46;"></div>
<div style="left:506px;top:572px;width:156px;height:2px;background:#1e6e46;"></div>
<div style="left:506px;top:556px;width:2px;height:18px;background:#1e6e46;"></div>
<div style="left:663px;top:556px;width:2px;height:14px;background:#1e6e46;"></div>
<div style="left:661px;top:570px;width:5px;height:5px;background:#1e6e46;outline:1px solid #fff"></div>
<div style="left:406px;top:369px;width:4px;height:1px;background:#111;"></div>
<div style="left:654px;top:369px;width:4px;height:1px;background:#111;"></div>
<div style="left:406px;top:429px;width:4px;height:1px;background:#111;"></div>
<div style="left:654px;top:429px;width:4px;height:1px;background:#111;"></div>
<div style="left:406px;top:535px;width:4px;height:1px;background:#111;"></div>
<div style="left:640px;top:535px;width:4px;height:1px;background:#111;"></div>
<div style="left:406px;top:550px;width:4px;height:1px;background:#111;"></div>
<div style="left:406px;top:565px;width:4px;height:1px;background:#111;"></div>
<div style="left:406px;top:580px;width:4px;height:1px;background:#111;"></div>
<div style="left:640px;top:580px;width:4px;height:1px;background:#111;"></div>
<div style="left:406px;top:595px;width:4px;height:1px;background:#111;"></div>
<div style="left:640px;top:595px;width:4px;height:1px;background:#111;"></div>
<div style="left:406px;top:610px;width:4px;height:1px;background:#111;"></div>
<div style="left:640px;top:610px;width:4px;height:1px;background:#111;"></div>
<div style="left:406px;top:625px;width:4px;height:1px;background:#111;"></div>
<div style="left:640px;top:625px;width:4px;height:1px;background:#111;"></div>
<div style="left:406px;top:640px;width:4px;height:1px;background:#111;"></div>
<div style="left:640px;top:640px;width:4px;height:1px;background:#111;"></div>
<div style="left:406px;top:670px;width:4px;height:1px;background:#111;"></div>
<div style="left:636px;top:670px;width:5px;height:1px;background:#111;"></div>
<div style="left:638px;top:693px;width:5px;height:1px;background:#111;"></div>
<div style="left:378px;top:730px;width:4px;height:1px;background:#111;"></div>
<div style="left:483px;top:730px;width:4px;height:1px;background:#111;"></div>
<div style="left:652px;top:730px;width:4px;height:1px;background:#111;"></div>
<div style="left:378px;top:746px;width:4px;height:1px;background:#111;"></div>
<div style="left:483px;top:746px;width:4px;height:1px;background:#111;"></div>
<div style="left:652px;top:746px;width:4px;height:1px;background:#111;"></div>
<div style="left:378px;top:778px;width:4px;height:1px;background:#111;"></div>
<div style="left:483px;top:778px;width:4px;height:1px;background:#111;"></div>
<div style="left:652px;top:778px;width:4px;height:1px;background:#111;"></div>
<div style="left:279px;top:762px;width:4px;height:1px;background:#111;"></div>
<div style="left:654px;top:762px;width:4px;height:1px;background:#111;"></div>
<div style="left:279px;top:794px;width:4px;height:1px;background:#111;"></div>
<div style="left:652px;top:794px;width:4px;height:1px;background:#111;"></div>
<div style="left:650px;top:826px;width:5px;height:1px;background:#111;"></div>
<div style="left:1898px;top:219px;width:22px;height:759px;background:#121010;"></div>
<svg style="left:1904px;top:223px;" width="11" height="9" viewBox="0 0 11 9"><path d="M0.500 8l5-7 5 7z" fill="#9a9696"/></svg>
<div style="left:1905px;top:236px;width:9px;height:598px;background:linear-gradient(90deg,#8a8686,#a09c9c);border-radius:4.500px"></div>
<svg style="left:1904px;top:966px;" width="11" height="9" viewBox="0 0 11 9"><path d="M0.500 1l5 7 5-7z" fill="#9a9696"/></svg>
<div style="left:0px;top:978px;width:1920px;height:32px;background:#141418;"></div>
<div style="left:0px;top:1010px;width:1920px;height:22px;background:#151314;"></div>
<div style="left:0px;top:1010px;width:1920px;height:1px;background:#2c2a2b;"></div>
<svg style="left:27px;top:988px;" width="9" height="12" viewBox="0 0 9 12"><path d="M7.500 1L2 6l5.500 5" fill="none" stroke="#b8b8b8" stroke-width="1.400"/></svg>
<svg style="left:60px;top:988px;" width="9" height="12" viewBox="0 0 9 12"><path d="M1.500 1L7 6l-5.500 5" fill="none" stroke="#8a8a8a" stroke-width="1.400"/></svg>
<div style="left:90.5px;top:992.5px;width:2.5px;height:2.5px;background:#d8d8d8;"></div>
<div style="left:94.5px;top:992.5px;width:2.5px;height:2.5px;background:#d8d8d8;"></div>
<div style="left:98.5px;top:992.5px;width:2.5px;height:2.5px;background:#d8d8d8;"></div>
<div style="left:232.5px;top:984.5px;width:1px;height:18.5px;background:#5a5a5e;"></div>
<div style="left:358.3px;top:984.5px;width:1px;height:18.5px;background:#5a5a5e;"></div>
<div style="left:426.8px;top:984.5px;width:1px;height:18.5px;background:#5a5a5e;"></div>
<div style="left:511.5px;top:984.5px;width:1px;height:18.5px;background:#5a5a5e;"></div>
<div style="left:651px;top:984.5px;width:1px;height:18.5px;background:#5a5a5e;"></div>
<div style="left:712.5px;top:984.5px;width:1px;height:18.5px;background:#5a5a5e;"></div>
<div style="left:765px;top:984.5px;width:1px;height:18.5px;background:#5a5a5e;"></div>
<div style="left:857.5px;top:984.5px;width:1px;height:18.5px;background:#5a5a5e;"></div>
<div style="left:898.5px;top:984.5px;width:1px;height:18.5px;background:#5a5a5e;"></div>
<div style="left:940.5px;top:984.5px;width:1px;height:18.5px;background:#5a5a5e;"></div>
<div style="left:981px;top:984.5px;width:1px;height:18.5px;background:#5a5a5e;"></div>
<div style="left:1060.5px;top:984.5px;width:1px;height:18.5px;background:#5a5a5e;"></div>
<div style="left:656px;top:982px;width:52px;height:24px;background:#10a548;border-radius:2px"></div>
<div style="left:716.5px;top:982px;width:45px;height:24px;background:#f00000;border-radius:2px"></div>
<div style="left:770px;top:978px;width:83px;height:28px;background:linear-gradient(180deg,#fff4f4 0%,#fbdcdc 45%,#f4a6a6 100%);border-radius:0 0 5px 5px"></div>
<div style="left:778px;top:1000px;width:66.5px;height:2px;background:#55552a;"></div>
<svg style="left:1102px;top:988px;" width="12" height="12" viewBox="0 0 12 12"><path d="M6 0.500v11M0.500 6h11" stroke="#e0e0e0" stroke-width="1.200"/></svg>
<div style="left:1154px;top:989.5px;width:2px;height:2px;background:#d8d8d8;"></div>
<div style="left:1154px;top:993.5px;width:2px;height:2px;background:#d8d8d8;"></div>
<div style="left:1154px;top:997.5px;width:2px;height:2px;background:#d8d8d8;"></div>
<svg style="left:1175px;top:988px;" width="8" height="11" viewBox="0 0 8 11"><path d="M7 0.500v10L1 5.500z" fill="#a8a8a8"/></svg>
<div style="left:1188px;top:989.5px;width:17px;height:8px;background:#c8c8c8;border-radius:4px"></div>
<svg style="left:1889px;top:988px;" width="8" height="11" viewBox="0 0 8 11"><path d="M1 0.500v10l6-5z" fill="#a8a8a8"/></svg>
<svg style="left:61px;top:1013px;" width="16" height="16" viewBox="0 0 16 16"><circle cx="7" cy="2.500" r="1.700" fill="none" stroke="#e0e0e0" stroke-width="1.100"/><path d="M1 5.500l6 1.500 6-1.500M7 7v3.500M7 10.500l-3.500 4.500M7 10.500l1.500 2" fill="none" stroke="#e0e0e0" stroke-width="1.100"/><path d="M10 11l4.500 4.500M14.500 11L10 15.500" stroke="#e0e0e0" stroke-width="1.100"/></svg>
<div style="left:1626px;top:1011px;width:40px;height:21px;background:#2b2929;"></div>
<svg style="left:1639px;top:1014px;" width="14" height="14" viewBox="0 0 14 14"><rect x="0.600" y="0.600" width="12.800" height="12.800" fill="none" stroke="#f0f0f0" stroke-width="1.200"/><path d="M5 0.600v12.800M9 0.600v12.800M0.600 5h12.800M0.600 9h12.800" stroke="#f0f0f0" stroke-width="1.100"/></svg>
<svg style="left:1679px;top:1014px;" width="15" height="14" viewBox="0 0 15 14"><rect x="0.600" y="0.600" width="13.800" height="12.800" fill="none" stroke="#f0f0f0" stroke-width="1.200"/><rect x="3.500" y="3.500" width="8" height="7" fill="none" stroke="#f0f0f0" stroke-width="1.100"/><path d="M5.500 6h4M5.500 8h4" stroke="#f0f0f0" stroke-width="0.900"/></svg>
<svg style="left:1719px;top:1014px;" width="15" height="14" viewBox="0 0 15 14"><rect x="0.600" y="0.600" width="13.800" height="12.800" fill="none" stroke="#f0f0f0" stroke-width="1.200"/><path d="M4.500 0.600v6.500h5V0.600M0.600 7.100h13.800" fill="none" stroke="#f0f0f0" stroke-width="1.200"/></svg>
<div style="left:1752px;top:1021px;width:8px;height:1px;background:#e0e0e0;"></div>
<div style="left:1765px;top:1021px;width:100px;height:1px;background:#8a8a8a;"></div>
<div style="left:1815px;top:1018px;width:1px;height:7px;background:#8a8a8a;"></div>
<div style="left:1805px;top:1015.5px;width:5px;height:12px;background:#b0b0b0;"></div>
<svg style="left:1869px;top:1016px;" width="10" height="10" viewBox="0 0 10 10"><path d="M5 0.500v9M0.500 5h9" stroke="#e0e0e0" stroke-width="1.100"/></svg>
<div style="left:0px;top:1032px;width:1920px;height:48px;background:linear-gradient(90deg,#1c2428 0%,#182024 30%,#151c20 60%,#141a1e 100%);"></div>
<div style="left:0px;top:1032px;width:1920px;height:1px;background:#30383c;"></div>
<svg style="left:18px;top:1040px;" width="30" height="28" viewBox="0 0 30 28"><path d="M2 16a9.500 9 0 0 1 19 0c-1.500-1.500-3.500-1.500-4.800 0-1.300-1.500-3.300-1.500-4.700 0-1.400-1.500-3.400-1.500-4.700 0-1.400-1.500-3.300-1.500-4.800 0z" fill="#5aa6e8"/><path d="M11.500 16v8.500a2.200 2.200 0 0 1-4.400 0" fill="none" stroke="#8a7a6a" stroke-width="1.600"/><circle cx="20.500" cy="6.500" r="7.500" fill="#f08a8e"/><text x="20.500" y="10.500" text-anchor="middle" font-family="Liberation Sans" font-size="11" fill="#3a1a1a">1</text></svg>
<div style="left:528.8px;top:1044.5px;width:11.2px;height:11.2px;background:linear-gradient(135deg,#6fd0ff,#1c9cf0);border-radius:1px"></div>
<div style="left:541.3px;top:1044.5px;width:11.2px;height:11.2px;background:linear-gradient(135deg,#6fd0ff,#1c9cf0);border-radius:1px"></div>
<div style="left:528.8px;top:1057px;width:11.2px;height:11.2px;background:linear-gradient(135deg,#6fd0ff,#1c9cf0);border-radius:1px"></div>
<div style="left:541.3px;top:1057px;width:11.2px;height:11.2px;background:linear-gradient(135deg,#6fd0ff,#1c9cf0);border-radius:1px"></div>
<div style="left:565px;top:1040px;width:220px;height:32px;background:#3a3e42;border-radius:16px;border:1px solid #4a4e52;box-sizing:border-box"></div>
<svg style="left:576px;top:1047px;" width="18" height="18" viewBox="0 0 18 18"><circle cx="7.500" cy="7.500" r="5.800" fill="none" stroke="#e8e8e8" stroke-width="1.700"/><path d="M11.800 11.800l4.500 4.500" stroke="#e8e8e8" stroke-width="1.900" stroke-linecap="round"/></svg>
<svg style="left:736px;top:1041px;" width="44" height="30" viewBox="0 0 44 30"><ellipse cx="21" cy="26" rx="20" ry="2.800" fill="#e8d8b0"/><path d="M6 8l4-5 3 3 16 3c3 1 4 4 3 8l-1 8h-2l-1-7-8-1-1 8h-2l-1-9-6-3-3 1-2-3z" fill="#d8d0e0"/><path d="M13 8l-1 6M17 8.500l-1 7M21 9.500v7M25 10.500l1 6M9 5l2 4" stroke="#4a3a5a" stroke-width="1.200"/></svg>
<div style="left:797px;top:1050px;width:17px;height:16px;background:#6a6e72;border-radius:1.500px"></div>
<div style="left:803px;top:1044.5px;width:18px;height:16px;background:#e4e6e8;border-radius:1.500px"></div>
<div style="left:803px;top:1050px;width:11px;height:10.5px;background:#b8bcc0;"></div>
<svg style="left:841px;top:1044px;" width="26" height="24" viewBox="0 0 26 24"><path d="M0.500 3a1.500 1.500 0 0 1 1.500-1.500h7l2.500 3H24a1.500 1.500 0 0 1 1.500 1.500v14a1.500 1.500 0 0 1-1.500 1.500H2A1.500 1.500 0 0 1 .500 20z" fill="#f5b92e"/><path d="M0.500 7h25v13a1.500 1.500 0 0 1-1.500 1.500H2A1.500 1.500 0 0 1 .500 20z" fill="#fcd25a"/><rect x="6" y="15" width="14" height="6.500" rx="1" fill="#1a7ad8"/><rect x="8.500" y="17.500" width="9" height="4" fill="#0f5fb0"/></svg>
<div style="left:850.5px;top:1072.5px;width:5px;height:2px;background:#8a9094;border-radius:1px"></div>
<svg style="left:884px;top:1044px;" width="26" height="26" viewBox="0 0 26 26"><circle cx="13" cy="13" r="12" fill="#1a80d8"/><path d="M1.500 15C1 7 7 1.500 14 1.500c6 0 10.500 4 10.500 9 0 3-2 5-5 5-2.500 0-3.500-1-3.500-2 0-1.500 1-1.500 1-3 0-2-2-3.500-5-3.500-5 0-9 4-10.500 8z" fill="#35c8a8"/><path d="M13 24.500c-4 0-6.500-3-6.500-6.500 0-3 2-5.500 4.500-6-1 1-1.500 2.500-1.500 4 0 4 3.500 7 8 7 2 0 3.500-.500 4.500-1-2 2-5 2.500-9 2.500z" fill="#0a4fa0"/></svg>
<svg style="left:928px;top:1043px;" width="26" height="27" viewBox="0 0 26 27"><path d="M8 7V5a5 5 0 0 1 10 0v2" fill="none" stroke="#3a9ae8" stroke-width="1.800"/><rect x="1.500" y="6.500" width="23" height="19" rx="3" fill="#f4f4f4"/><rect x="8" y="11" width="4.500" height="4.500" fill="#f25022"/><rect x="13.500" y="11" width="4.500" height="4.500" fill="#7fba00"/><rect x="8" y="16.500" width="4.500" height="4.500" fill="#00a4ef"/><rect x="13.500" y="16.500" width="4.500" height="4.500" fill="#ffb900"/></svg>
<svg style="left:972px;top:1043px;" width="27" height="27" viewBox="0 0 27 27"><path d="M13.500 2a11 11 0 0 0-9.500 16.500L2.500 24.500l6.200-1.600A11 11 0 1 0 13.500 2z" fill="none" stroke="#2ecc71" stroke-width="2.400"/><path d="M9.500 8c-1 1-1.200 2.500-.300 4.300 1.200 2.400 3.200 4.300 5.700 5.200 1.500.500 2.700 0 3.500-1l-2.200-2-1.500 1c-1.500-.700-2.700-1.900-3.400-3.400l1-1.400z" fill="#2ecc71"/></svg>
<svg style="left:1017px;top:1044px;" width="25" height="25" viewBox="0 0 25 25"><circle cx="12.500" cy="12.500" r="12" fill="#e8e8e8"/><path d="M12.500 12.500L2.100 6.500A12 12 0 0 1 22.900 6.500z" fill="#ea4335"/><path d="M12.500 12.500L22.900 6.500A12 12 0 0 1 12.500 24.500z" fill="#fbbc05"/><path d="M12.500 12.500L12.500 24.500A12 12 0 0 1 2.100 6.500z" fill="#34a853"/><circle cx="12.500" cy="12.500" r="5.600" fill="#fff"/><circle cx="12.500" cy="12.500" r="4.400" fill="#4285f4"/></svg>
<svg style="left:1060px;top:1044px;" width="27" height="27" viewBox="0 0 27 27"><rect x="1" y="1" width="18" height="17" rx="2" fill="#f0f0f0"/><rect x="3" y="3" width="14" height="3" fill="#d83a2a"/><rect x="3" y="3" width="3" height="11" fill="#d83a2a"/><rect x="7" y="7" width="9" height="9" fill="#c8d0d8"/><circle cx="15" cy="22" r="2.500" fill="none" stroke="#3a9ae8" stroke-width="1.500"/><circle cx="23" cy="15" r="2.500" fill="none" stroke="#3a9ae8" stroke-width="1.500"/><path d="M16.500 20l5-3.500M12 12l8 8" stroke="#3a9ae8" stroke-width="1.500"/></svg>
<svg style="left:1107px;top:1044px;" width="20" height="25" viewBox="0 0 20 25"><rect x="0.500" y="0.500" width="19" height="24" rx="1.500" fill="#8a9098"/><rect x="2.500" y="2.500" width="15" height="5" fill="#4ac0f0"/><g fill="#e0e4e8"><rect x="2.500" y="9.500" width="4" height="4"/><rect x="8" y="9.500" width="4" height="4"/><rect x="2.500" y="15" width="4" height="4"/><rect x="8" y="15" width="4" height="4"/><rect x="2.500" y="20" width="4" height="3.500"/><rect x="8" y="20" width="4" height="3.500"/><rect x="13.500" y="9.500" width="4" height="4"/></g><rect x="13.500" y="15" width="4" height="8.500" fill="#1a5aa8"/></svg>
<svg style="left:1151px;top:1044px;" width="20" height="25" viewBox="0 0 20 25"><rect x="0.500" y="1.500" width="19" height="23" rx="1" fill="#58b8e8"/><rect x="0.500" y="21" width="19" height="3.500" fill="#e88a2a"/><path d="M3.500 7h13M3.500 10.500h13M3.500 14h13M3.500 17.500h9" stroke="#1a6aa8" stroke-width="1.500"/><path d="M3 1.500v2M6 1.500v2M9 1.500v2M12 1.500v2M15 1.500v2" stroke="#e8f4ff" stroke-width="1"/></svg>
<svg style="left:1192px;top:1044px;" width="26" height="26" viewBox="0 0 26 26"><circle cx="13" cy="13" r="12.500" fill="#e8384a"/><path d="M7.500 19l5.500-13 5.500 13" fill="none" stroke="#fff" stroke-width="2.600" stroke-linejoin="round"/></svg>
<div style="left:1230px;top:1036px;width:39px;height:40px;background:#252d31;border-radius:4px;border:1px solid #30383c;box-sizing:border-box"></div>
<svg style="left:1236px;top:1043px;" width="27" height="26" viewBox="0 0 27 26"><rect x="6" y="0.500" width="20" height="24" rx="2" fill="#21a366"/><rect x="16" y="0.500" width="10" height="8" fill="#4ad88a"/><rect x="6" y="8.500" width="10" height="8" fill="#107c41"/><rect x="16" y="8.500" width="10" height="8" fill="#21a366"/><rect x="6" y="16.500" width="20" height="8" fill="#185c37"/><rect x="0.500" y="9" width="14" height="14" rx="1.500" fill="#107c41"/><path d="M4.500 12.500l6 7.500M10.500 12.500l-6 7.500" stroke="#fff" stroke-width="1.700"/></svg>
<div style="left:1241px;top:1072px;width:16px;height:3px;background:#4cc2ff;border-radius:1.500px"></div>
<svg style="left:1281px;top:1046px;" width="25" height="20" viewBox="0 0 25 20"><rect x="0.500" y="0.500" width="24" height="19" rx="2" fill="#2e3236"/><rect x="0.500" y="0.500" width="24" height="3.500" fill="#8a8e92"/><path d="M4 8l5 3.500L4 15" fill="none" stroke="#e8e8e8" stroke-width="1.800"/><path d="M11 15.500h7" stroke="#e8e8e8" stroke-width="1.800"/></svg>
<div style="left:1290px;top:1072.5px;width:6px;height:2px;background:#8a9094;border-radius:1px"></div>
<svg style="left:1325px;top:1044px;" width="24" height="26" viewBox="0 0 24 26"><path d="M1 2l6.500 4.500L12 9l4.500-2.500L23 2v16l-11 7-11-7z" fill="#c8202c"/><path d="M6.500 9.500L12 13l5.500-3.500V17L12 20.500 6.500 17z" fill="#171f23"/></svg>
<div style="left:1334px;top:1072.5px;width:6px;height:2px;background:#8a9094;border-radius:1px"></div>
<svg style="left:1369px;top:1044px;" width="25" height="25" viewBox="0 0 25 25"><rect x="0.500" y="0.500" width="24" height="24" rx="4" fill="#a020d8"/><rect x="4" y="10.500" width="17" height="4" fill="#f0e0ff"/><path d="M6 10.500v4M9 10.500v4M12 10.500v4M15 10.500v4M18 10.500v4" stroke="#a020d8" stroke-width="0.800"/></svg>
<div style="left:1378px;top:1072.5px;width:6px;height:2px;background:#8a9094;border-radius:1px"></div>
<svg style="left:1696px;top:1051px;" width="13" height="9" viewBox="0 0 13 9"><path d="M1.500 7.500l5-5.500 5 5.500" fill="none" stroke="#f0f0f0" stroke-width="1.500"/></svg>
<svg style="left:1725px;top:1048px;" width="19" height="16" viewBox="0 0 19 16"><path d="M5 12.500a3.500 3.500 0 0 1 .500-7 5 5 0 0 1 9.500 1 3 3 0 0 1-.500 6z" fill="#7a7e82"/><path d="M3 1.500l13 13" stroke="#a8acb0" stroke-width="1.300"/></svg>
<svg style="left:1757px;top:1047px;" width="18" height="18" viewBox="0 0 18 18"><rect x="1" y="2" width="12" height="10" fill="none" stroke="#f0f0f0" stroke-width="1.200"/><path d="M7 12v3M3.500 15.500h7" stroke="#f0f0f0" stroke-width="1.200"/><rect x="12.500" y="1" width="4" height="6" rx="0.800" fill="#1a2226" stroke="#f0f0f0" stroke-width="1.100"/><path d="M14.500 7v9" stroke="#f0f0f0" stroke-width="1.100"/></svg>
<svg style="left:1781px;top:1048px;" width="19" height="16" viewBox="0 0 19 16"><path d="M1 5.500h3l4-3.500v12l-4-3.500H1z" fill="none" stroke="#f0f0f0" stroke-width="1.200" stroke-linejoin="round"/><path d="M10.500 5.500a3.500 3.500 0 0 1 0 5M12.800 3.500a6.500 6.500 0 0 1 0 9M15.200 1.800a9 9 0 0 1 0 12.400" fill="none" stroke="#f0f0f0" stroke-width="1.100"/></svg>
<svg style="left:1885px;top:1047px;" width="16" height="18" viewBox="0 0 16 18"><path d="M3 12.500V8a5 5 0 0 1 10 0v4.500l1.500 1.500h-13z" fill="#f0f0f0"/><path d="M6 15.500a2 2 0 0 0 4 0" fill="#f0f0f0"/><text x="9" y="6" font-family="Liberation Sans" font-size="6" font-weight="bold" fill="#f0f0f0">z</text><text x="5.500" y="11" font-family="Liberation Sans" font-size="6.500" font-weight="bold" fill="#1a2226">z</text></svg>
<span style="top:18px;font-size:12.5px;line-height:14px;color:#ffffff;left:182.13px;transform-origin:0 50%;transform:scaleX(0.9201);">Kertas Kerja Sentosa Abadi Advertaising 2025 ayu  -  Excel</span>
<span style="top:17px;font-size:13px;line-height:15px;color:#cfcfcf;left:825.55px;transform-origin:0 50%;transform:scaleX(0.9741);">Search</span>
<span style="top:17px;font-size:12.5px;line-height:14px;color:#111;left:1717.87px;transform-origin:50% 50%;transform:scaleX(0.9512);">Sign in</span>
<span style="top:56px;font-size:13.2px;line-height:15px;color:#ffffff;left:20.58px;transform-origin:0 50%;transform:scaleX(0.9741);">File</span>
<span class="b" style="top:56px;font-size:13.2px;line-height:15px;color:#ffffff;left:66.55px;transform-origin:0 50%;transform:scaleX(1.0384);">Home</span>
<span style="top:56px;font-size:13.2px;line-height:15px;color:#ffffff;left:122.83px;transform-origin:0 50%;transform:scaleX(1.0180);">Insert</span>
<span style="top:56px;font-size:13.2px;line-height:15px;color:#ffffff;left:175.53px;transform-origin:0 50%;transform:scaleX(1.0215);">Draw</span>
<span style="top:56px;font-size:13.2px;line-height:15px;color:#ffffff;left:227.87px;transform-origin:0 50%;transform:scaleX(0.9756);">Page Layout</span>
<span style="top:56px;font-size:13.2px;line-height:15px;color:#ffffff;left:320.57px;transform-origin:0 50%;transform:scaleX(0.9823);">Formulas</span>
<span style="top:56px;font-size:13.2px;line-height:15px;color:#ffffff;left:394.87px;transform-origin:0 50%;transform:scaleX(0.9847);">Data</span>
<span style="top:56px;font-size:13.2px;line-height:15px;color:#ffffff;left:443.10px;transform-origin:0 50%;transform:scaleX(0.9458);">Review</span>
<span style="top:56px;font-size:13.2px;line-height:15px;color:#ffffff;left:503.55px;transform-origin:0 50%;transform:scaleX(0.9680);">View</span>
<span style="top:56px;font-size:13.2px;line-height:15px;color:#ffffff;left:549.49px;transform-origin:0 50%;transform:scaleX(1.0625);">Help</span>
<span style="top:56px;font-size:13.2px;line-height:15px;color:#ffffff;left:598.55px;transform-origin:0 50%;transform:scaleX(1.0244);">Acrobat</span>
<span style="top:56px;font-size:13.5px;line-height:15px;color:#10301f;left:1857.85px;transform-origin:0 50%;transform:scaleX(0.9404);">Share</span>
<span style="top:121px;font-size:12.3px;line-height:14px;color:#7b7b7b;left:26.12px;transform-origin:0 50%;transform:scaleX(0.9279);">Paste</span>
<span style="top:88px;font-size:12.3px;line-height:14px;color:#f2f2f2;left:87.85px;transform-origin:0 50%;transform:scaleX(0.9737);">Cut</span>
<span style="top:114px;font-size:12.3px;line-height:14px;color:#f2f2f2;left:87.85px;transform-origin:0 50%;transform:scaleX(0.9608);">Copy</span>
<span style="top:140px;font-size:12.3px;line-height:14px;color:#f2f2f2;left:86.87px;transform-origin:0 50%;transform:scaleX(0.9772);">Format Painter</span>
<span style="top:161px;font-size:11.8px;line-height:14px;color:#f2f2f2;left:64.25px;transform-origin:0 50%;transform:scaleX(1.0254);">Clipboard</span>
<span style="top:95px;font-size:12.5px;line-height:14px;color:#ffffff;left:194.35px;transform-origin:0 50%;transform:scaleX(0.9947);">Arial</span>
<span style="top:95px;font-size:12.5px;line-height:14px;color:#ffffff;left:319.00px;">9</span>
<span style="top:94px;font-size:15.5px;line-height:17px;color:#e8e8e8;left:365.50px;">A</span>
<span style="top:96px;font-size:13px;line-height:15px;color:#e8e8e8;left:393.50px;">A</span>
<span class="b" style="top:126px;font-size:13.5px;line-height:15px;color:#e8e8e8;left:199.50px;">B</span>
<span class="i s" style="top:126px;font-size:14px;line-height:15px;color:#e8e8e8;left:227.50px;">I</span>
<span style="top:124px;font-size:13px;line-height:15px;color:#e8e8e8;left:249.00px;">U</span>
<span style="top:124px;font-size:13.5px;line-height:15px;color:#e8e8e8;left:379.50px;">A</span>
<span style="top:161px;font-size:11.8px;line-height:14px;color:#f2f2f2;left:281.25px;transform-origin:0 50%;transform:scaleX(0.9947);">Font</span>
<span style="top:96px;font-size:12.3px;line-height:14px;color:#f2f2f2;left:594.85px;transform-origin:0 50%;transform:scaleX(0.9442);">Wrap Text</span>
<span style="top:128px;font-size:12.3px;line-height:14px;color:#f2f2f2;left:593.85px;transform-origin:0 50%;transform:scaleX(0.9988);">Merge &amp; Center</span>
<span style="top:161px;font-size:11.8px;line-height:14px;color:#f2f2f2;left:534.85px;transform-origin:0 50%;transform:scaleX(1.0079);">Alignment</span>
<span style="top:95px;font-size:12.5px;line-height:14px;color:#ffffff;left:732.05px;transform-origin:0 50%;transform:scaleX(0.9870);">Custom</span>
<span style="top:124px;font-size:17.5px;line-height:20px;color:#e0e0e0;left:774.50px;">%</span>
<span style="top:161px;font-size:11.8px;line-height:14px;color:#f2f2f2;left:772.85px;transform-origin:0 50%;transform:scaleX(0.9898);">Number</span>
<span style="top:121px;font-size:12.3px;line-height:14px;color:#f2f2f2;left:897.05px;transform-origin:0 50%;transform:scaleX(1.0215);">Conditional</span>
<span style="top:137px;font-size:12.3px;line-height:14px;color:#f2f2f2;left:891.83px;transform-origin:0 50%;transform:scaleX(1.0236);">Formatting</span>
<span style="top:121px;font-size:12.3px;line-height:14px;color:#f2f2f2;left:968.89px;transform-origin:0 50%;transform:scaleX(0.9650);">Format as</span>
<span style="top:137px;font-size:12.3px;line-height:14px;color:#f2f2f2;left:977.05px;transform-origin:0 50%;transform:scaleX(0.9270);">Table</span>
<span style="top:98px;font-size:13px;line-height:15px;color:#111;left:1037.05px;transform-origin:0 50%;transform:scaleX(0.9948);">Comma 6 2 2</span>
<span style="top:98px;font-size:13px;line-height:15px;color:#111;left:1142.85px;transform-origin:0 50%;transform:scaleX(1.0264);">Comma 7</span>
<span style="top:126px;font-size:13px;line-height:15px;color:#111;left:1037.05px;transform-origin:0 50%;transform:scaleX(1.0358);">Comma  7 5</span>
<span style="top:126px;font-size:13px;line-height:15px;color:#111;left:1142.85px;transform-origin:0 50%;transform:scaleX(1.0264);">Comma 8</span>
<span style="top:161px;font-size:11.8px;line-height:14px;color:#f2f2f2;left:1065.85px;transform-origin:0 50%;transform:scaleX(0.9092);">Styles</span>
<span style="top:121px;font-size:12.3px;line-height:14px;color:#f2f2f2;left:1291.09px;transform-origin:0 50%;transform:scaleX(0.9625);">Insert</span>
<span style="top:121px;font-size:12.3px;line-height:14px;color:#f2f2f2;left:1333.29px;transform-origin:0 50%;transform:scaleX(0.9566);">Delete</span>
<span style="top:121px;font-size:12.3px;line-height:14px;color:#f2f2f2;left:1375.26px;transform-origin:0 50%;transform:scaleX(0.9863);">Format</span>
<span style="top:161px;font-size:11.8px;line-height:14px;color:#f2f2f2;left:1339.25px;transform-origin:0 50%;transform:scaleX(0.9004);">Cells</span>
<span style="top:88px;font-size:12.3px;line-height:14px;color:#f2f2f2;left:1457.05px;transform-origin:0 50%;transform:scaleX(0.9953);">AutoSum</span>
<span style="top:114px;font-size:12.3px;line-height:14px;color:#f2f2f2;left:1455.97px;transform-origin:0 50%;transform:scaleX(1.0805);">Fill</span>
<span style="top:140px;font-size:12.3px;line-height:14px;color:#f2f2f2;left:1457.05px;transform-origin:0 50%;transform:scaleX(0.9355);">Clear</span>
<span style="top:87px;font-size:14.5px;line-height:16px;color:#4aa3e0;left:1548.00px;">A</span>
<span style="top:101px;font-size:14.5px;line-height:16px;color:#e0e0e0;left:1548.50px;">Z</span>
<span style="top:121px;font-size:12.3px;line-height:14px;color:#f2f2f2;left:1545.55px;transform-origin:0 50%;transform:scaleX(0.9980);">Sort &amp;</span>
<span style="top:137px;font-size:12.3px;line-height:14px;color:#f2f2f2;left:1543.25px;transform-origin:0 50%;transform:scaleX(0.9988);">Filter</span>
<span style="top:121px;font-size:12.3px;line-height:14px;color:#f2f2f2;left:1589.49px;transform-origin:0 50%;transform:scaleX(1.0584);">Find &amp;</span>
<span style="top:137px;font-size:12.3px;line-height:14px;color:#f2f2f2;left:1587.55px;transform-origin:0 50%;transform:scaleX(0.9177);">Select</span>
<span style="top:161px;font-size:11.8px;line-height:14px;color:#f2f2f2;left:1514.25px;transform-origin:0 50%;transform:scaleX(1.0420);">Editing</span>
<span style="top:121px;font-size:12.3px;line-height:14px;color:#f2f2f2;left:1650.85px;transform-origin:0 50%;transform:scaleX(1.0254);">Add-ins</span>
<span style="top:161px;font-size:11.8px;line-height:14px;color:#f2f2f2;left:1651.55px;transform-origin:0 50%;transform:scaleX(1.0125);">Add-ins</span>
<span style="top:121px;font-size:12.3px;line-height:14px;color:#f2f2f2;left:1714.25px;transform-origin:0 50%;transform:scaleX(0.9205);">Create and Share</span>
<span style="top:137px;font-size:12.3px;line-height:14px;color:#f2f2f2;left:1728.55px;transform-origin:0 50%;transform:scaleX(0.9398);">Adobe PDF</span>
<span style="top:161px;font-size:11.8px;line-height:14px;color:#f2f2f2;left:1719.85px;transform-origin:0 50%;transform:scaleX(0.9915);">Adobe Acrobat</span>
<span style="top:192px;font-size:13px;line-height:15px;color:#ffffff;left:14.03px;transform-origin:0 50%;transform:scaleX(1.0228);">K22</span>
<span class="b i s" style="top:189px;font-size:15.5px;line-height:17px;color:#ececec;left:184.55px;transform-origin:0 50%;transform:scaleX(1.0941);">fx</span>
<span style="top:221px;font-size:11.3px;line-height:12px;color:#e4e4e4;left:49.50px;">A</span>
<span style="top:221px;font-size:11.3px;line-height:12px;color:#e4e4e4;left:87.50px;">B</span>
<span style="top:221px;font-size:11.3px;line-height:12px;color:#e4e4e4;left:99.50px;">C</span>
<span style="top:221px;font-size:11.3px;line-height:12px;color:#e4e4e4;left:112.00px;">D</span>
<span style="top:221px;font-size:11.3px;line-height:12px;color:#e4e4e4;left:183.50px;">E</span>
<span style="top:221px;font-size:11.3px;line-height:12px;color:#e4e4e4;left:260.50px;">F</span>
<span style="top:221px;font-size:11.3px;line-height:12px;color:#e4e4e4;left:328.50px;">G</span>
<span style="top:221px;font-size:11.3px;line-height:12px;color:#e4e4e4;left:392.00px;">H</span>
<span style="top:221px;font-size:11.3px;line-height:12px;color:#e4e4e4;left:446.50px;">I</span>
<span style="top:221px;font-size:11.3px;line-height:12px;color:#e4e4e4;left:498.50px;">J</span>
<span style="top:221px;font-size:11.3px;line-height:12px;color:#e4e4e4;left:581.50px;">K</span>
<span style="top:221px;font-size:11.3px;line-height:12px;color:#e4e4e4;left:685.00px;">N</span>
<span style="top:221px;font-size:11.3px;line-height:12px;color:#e4e4e4;left:741.00px;">O</span>
<span style="top:221px;font-size:11.3px;line-height:12px;color:#e4e4e4;left:813.50px;">P</span>
<span style="top:221px;font-size:11.3px;line-height:12px;color:#e4e4e4;left:884.00px;">Q</span>
<span style="top:221px;font-size:11.3px;line-height:12px;color:#e4e4e4;left:946.50px;">R</span>
<span style="top:221px;font-size:11.3px;line-height:12px;color:#e4e4e4;left:1008.50px;">S</span>
<span style="top:221px;font-size:11.3px;line-height:12px;color:#e4e4e4;left:1071.00px;">T</span>
<span style="top:221px;font-size:11.3px;line-height:12px;color:#e4e4e4;left:1132.50px;">U</span>
<span style="top:221px;font-size:11.3px;line-height:12px;color:#e4e4e4;left:1194.50px;">V</span>
<span style="top:221px;font-size:11.3px;line-height:12px;color:#e4e4e4;left:1255.00px;">W</span>
<span style="top:221px;font-size:11.3px;line-height:12px;color:#e4e4e4;left:1318.50px;">X</span>
<span style="top:221px;font-size:11.3px;line-height:12px;color:#e4e4e4;left:1380.50px;">Y</span>
<span style="top:221px;font-size:11.3px;line-height:12px;color:#e4e4e4;left:1443.00px;">Z</span>
<span style="top:221px;font-size:11.3px;line-height:12px;color:#e4e4e4;left:1500.73px;">AA</span>
<span style="top:221px;font-size:11.3px;line-height:12px;color:#e4e4e4;left:1563.23px;">AB</span>
<span style="top:221px;font-size:11.3px;line-height:12px;color:#e4e4e4;left:1624.73px;">AC</span>
<span style="top:221px;font-size:11.3px;line-height:12px;color:#e4e4e4;left:1686.73px;">AD</span>
<span style="top:221px;font-size:11.3px;line-height:12px;color:#e4e4e4;left:1748.73px;">AE</span>
<span style="top:221px;font-size:11.3px;line-height:12px;color:#e4e4e4;left:1811.23px;">AF</span>
<span style="top:221px;font-size:11.3px;line-height:12px;color:#e4e4e4;left:1872.73px;">AG</span>
<span style="top:236px;font-size:11.4px;line-height:12px;color:#e4e4e4;left:7.90px;">1</span>
<span style="top:253px;font-size:11.4px;line-height:12px;color:#e4e4e4;left:7.90px;">2</span>
<span style="top:269px;font-size:11.4px;line-height:12px;color:#e4e4e4;left:7.90px;">3</span>
<span style="top:285px;font-size:11.4px;line-height:12px;color:#e4e4e4;left:7.90px;">4</span>
<span style="top:301px;font-size:11.4px;line-height:12px;color:#e4e4e4;left:7.90px;">5</span>
<span style="top:317px;font-size:11.4px;line-height:12px;color:#e4e4e4;left:7.90px;">6</span>
<span style="top:333px;font-size:11.4px;line-height:12px;color:#e4e4e4;left:7.90px;">7</span>
<span style="top:348px;font-size:11.4px;line-height:12px;color:#e4e4e4;left:7.90px;">8</span>
<span style="top:363px;font-size:11.4px;line-height:12px;color:#e4e4e4;left:7.90px;">9</span>
<span style="top:378px;font-size:11.4px;line-height:12px;color:#e4e4e4;left:4.73px;">10</span>
<span style="top:393px;font-size:11.4px;line-height:12px;color:#e4e4e4;left:5.16px;">11</span>
<span style="top:408px;font-size:11.4px;line-height:12px;color:#e4e4e4;left:4.73px;">12</span>
<span style="top:423px;font-size:11.4px;line-height:12px;color:#e4e4e4;left:4.73px;">13</span>
<span style="top:438px;font-size:11.4px;line-height:12px;color:#e4e4e4;left:4.73px;">14</span>
<span style="top:453px;font-size:11.4px;line-height:12px;color:#e4e4e4;left:4.73px;">15</span>
<span style="top:468px;font-size:11.4px;line-height:12px;color:#e4e4e4;left:4.73px;">16</span>
<span style="top:484px;font-size:11.4px;line-height:12px;color:#e4e4e4;left:4.73px;">17</span>
<span style="top:499px;font-size:11.4px;line-height:12px;color:#e4e4e4;left:4.73px;">18</span>
<span style="top:514px;font-size:11.4px;line-height:12px;color:#e4e4e4;left:4.73px;">19</span>
<span style="top:529px;font-size:11.4px;line-height:12px;color:#e4e4e4;left:4.73px;">20</span>
<span style="top:544px;font-size:11.4px;line-height:12px;color:#e4e4e4;left:4.73px;">21</span>
<span style="top:559px;font-size:11.4px;line-height:12px;color:#e4e4e4;left:4.73px;">22</span>
<span style="top:574px;font-size:11.4px;line-height:12px;color:#e4e4e4;left:4.73px;">23</span>
<span style="top:589px;font-size:11.4px;line-height:12px;color:#e4e4e4;left:4.73px;">24</span>
<span style="top:604px;font-size:11.4px;line-height:12px;color:#e4e4e4;left:4.73px;">25</span>
<span style="top:619px;font-size:11.4px;line-height:12px;color:#e4e4e4;left:4.73px;">26</span>
<span style="top:634px;font-size:11.4px;line-height:12px;color:#e4e4e4;left:4.73px;">27</span>
<span style="top:649px;font-size:11.4px;line-height:12px;color:#e4e4e4;left:4.73px;">28</span>
<span style="top:665px;font-size:11.4px;line-height:12px;color:#e4e4e4;left:4.73px;">29</span>
<span style="top:687px;font-size:11.4px;line-height:12px;color:#e4e4e4;left:4.73px;">30</span>
<span style="top:709px;font-size:11.4px;line-height:12px;color:#e4e4e4;left:4.73px;">31</span>
<span style="top:725px;font-size:11.4px;line-height:12px;color:#e4e4e4;left:4.73px;">32</span>
<span style="top:741px;font-size:11.4px;line-height:12px;color:#e4e4e4;left:4.73px;">33</span>
<span style="top:757px;font-size:11.4px;line-height:12px;color:#e4e4e4;left:4.73px;">34</span>
<span style="top:773px;font-size:11.4px;line-height:12px;color:#e4e4e4;left:4.73px;">35</span>
<span style="top:789px;font-size:11.4px;line-height:12px;color:#e4e4e4;left:4.73px;">36</span>
<span style="top:805px;font-size:11.4px;line-height:12px;color:#e4e4e4;left:4.73px;">37</span>
<span style="top:821px;font-size:11.4px;line-height:12px;color:#e4e4e4;left:4.73px;">38</span>
<span style="top:837px;font-size:11.4px;line-height:12px;color:#e4e4e4;left:4.73px;">39</span>
<span style="top:853px;font-size:11.4px;line-height:12px;color:#e4e4e4;left:4.73px;">40</span>
<span style="top:869px;font-size:11.4px;line-height:12px;color:#e4e4e4;left:4.73px;">41</span>
<span style="top:885px;font-size:11.4px;line-height:12px;color:#e4e4e4;left:4.73px;">42</span>
<span style="top:901px;font-size:11.4px;line-height:12px;color:#e4e4e4;left:4.73px;">43</span>
<span style="top:917px;font-size:11.4px;line-height:12px;color:#e4e4e4;left:4.73px;">44</span>
<span style="top:933px;font-size:11.4px;line-height:12px;color:#e4e4e4;left:4.73px;">45</span>
<span style="top:949px;font-size:11.4px;line-height:12px;color:#e4e4e4;left:4.73px;">46</span>
<span style="top:965px;font-size:11.4px;line-height:12px;color:#e4e4e4;left:4.73px;">47</span>
<span class="b" style="top:252px;font-size:10.9px;line-height:12px;color:#000;left:287.10px;transform-origin:50% 50%;transform:scaleX(1.0075);">SENTOSA ABADI ADVERTAISING</span>
<span class="b" style="top:269px;font-size:11px;line-height:12px;color:#000;left:301.61px;transform-origin:50% 50%;transform:scaleX(1.0216);">PERHITUNGAN LABA RUGI</span>
<span class="b" style="top:285px;font-size:11px;line-height:12px;color:#000;left:239.37px;transform-origin:50% 50%;transform:scaleX(1.0285);">PERIODE 1 JANUARI 2025 s.d  31 DESEMBER 2025</span>
<span class="b" style="top:301px;font-size:11px;line-height:12px;color:#000;left:306.30px;transform-origin:50% 50%;transform:scaleX(1.0170);">(ANGKA DALAM RUPIAH)</span>
<span style="top:334px;font-size:10.3px;line-height:11px;color:#000;left:303.13px;transform-origin:50% 50%;transform:scaleX(0.9626);-webkit-text-stroke:0.22px #000;">KOMERSIAL</span>
<span style="top:334px;font-size:10.3px;line-height:11px;color:#000;left:406.61px;transform-origin:50% 50%;transform:scaleX(0.9586);-webkit-text-stroke:0.22px #000;">KOREKSI FISKAL</span>
<span style="top:334px;font-size:10.3px;line-height:11px;color:#000;left:568.02px;transform-origin:50% 50%;transform:scaleX(0.9845);-webkit-text-stroke:0.22px #000;">FISKAL</span>
<span class="b" style="top:363px;font-size:11px;line-height:12px;color:#000;left:86.55px;transform-origin:0 50%;transform:scaleX(1.0423);">PENDAPATAN DARI USAHA</span>
<span style="top:363px;font-size:10.6px;line-height:12px;color:#000;left:314.79px;transform-origin:100% 50%;transform:scaleX(1.0228);-webkit-text-stroke:0.22px #000;">3.292.995.372</span>
<span style="top:363px;font-size:10.6px;line-height:12px;color:#000;left:419.79px;transform-origin:100% 50%;transform:scaleX(1.0228);-webkit-text-stroke:0.22px #000;">3.292.995.372</span>
<span style="top:394px;font-size:10.3px;line-height:11px;color:#000;left:112.05px;transform-origin:0 50%;transform:scaleX(1.0189);-webkit-text-stroke:0.22px #000;">TOTAL PENDAPATAN</span>
<span class="b" style="top:393px;font-size:10.7px;line-height:12px;color:#000;left:313.34px;transform-origin:100% 50%;transform:scaleX(1.2046);">3.292.995.372</span>
<span class="b" style="top:423px;font-size:11px;line-height:12px;color:#000;left:86.55px;transform-origin:0 50%;transform:scaleX(1.1265);">HPP</span>
<span style="top:423px;font-size:10.6px;line-height:12px;color:#000;left:314.80px;transform-origin:100% 50%;transform:scaleX(0.9270);-webkit-text-stroke:0.22px #000;">1.167.069.125</span>
<span style="top:423px;font-size:10.6px;line-height:12px;color:#000;left:419.80px;transform-origin:100% 50%;transform:scaleX(0.9270);-webkit-text-stroke:0.22px #000;">1.167.069.125</span>
<span style="top:454px;font-size:10.3px;line-height:11px;color:#000;left:112.05px;transform-origin:0 50%;transform:scaleX(1.0089);-webkit-text-stroke:0.22px #000;">TOTAL HPP</span>
<span class="b" style="top:453px;font-size:10.7px;line-height:12px;color:#000;left:313.34px;transform-origin:100% 50%;transform:scaleX(1.1140);">1.167.069.125</span>
<span style="top:470px;font-size:10.3px;line-height:11px;color:#000;left:125.05px;transform-origin:0 50%;transform:scaleX(1.0092);-webkit-text-stroke:0.22px #000;">TOTAL LABA KOTOR</span>
<span class="b" style="top:469px;font-size:10.7px;line-height:12px;color:#000;left:313.34px;transform-origin:100% 50%;transform:scaleX(1.1739);">2.125.926.247</span>
<span class="b" style="top:514px;font-size:11px;line-height:12px;color:#000;left:86.55px;transform-origin:0 50%;transform:scaleX(1.0506);">BIAYA OPERASIONAL</span>
<span style="top:530px;font-size:10.3px;line-height:11px;color:#000;left:99.65px;transform-origin:0 50%;transform:scaleX(1.0356);-webkit-text-stroke:0.22px #000;">BIAYA GAJI</span>
<span style="top:529px;font-size:10.6px;line-height:12px;color:#000;left:323.63px;transform-origin:100% 50%;transform:scaleX(1.0234);-webkit-text-stroke:0.22px #000;">230.076.507</span>
<span style="top:529px;font-size:10.6px;line-height:12px;color:#000;left:428.63px;transform-origin:100% 50%;transform:scaleX(1.0234);-webkit-text-stroke:0.22px #000;">230.076.507</span>
<span style="top:545px;font-size:10.3px;line-height:11px;color:#000;left:99.65px;transform-origin:0 50%;transform:scaleX(0.9794);-webkit-text-stroke:0.22px #000;">Biaya Listrik</span>
<span style="top:544px;font-size:10.6px;line-height:12px;color:#000;left:335.41px;transform-origin:100% 50%;transform:scaleX(1.0225);-webkit-text-stroke:0.22px #000;">9.027.000</span>
<span style="top:544px;font-size:10.6px;line-height:12px;color:#000;left:440.41px;transform-origin:100% 50%;transform:scaleX(1.0225);-webkit-text-stroke:0.22px #000;">9.027.000</span>
<span style="top:560px;font-size:10.3px;line-height:11px;color:#000;left:99.65px;transform-origin:0 50%;transform:scaleX(1.0190);-webkit-text-stroke:0.22px #000;">Biaya Telekomunikasi</span>
<span style="top:559px;font-size:10.6px;line-height:12px;color:#000;left:335.41px;transform-origin:100% 50%;transform:scaleX(1.0225);-webkit-text-stroke:0.22px #000;">3.386.474</span>
<span style="top:559px;font-size:10.6px;line-height:12px;color:#000;left:440.41px;transform-origin:100% 50%;transform:scaleX(1.0225);-webkit-text-stroke:0.22px #000;">3.386.474</span>
<span style="top:575px;font-size:10.3px;line-height:11px;color:#000;left:99.65px;transform-origin:0 50%;transform:scaleX(1.0400);-webkit-text-stroke:0.22px #000;">BIAYA PAJAK</span>
<span style="top:574px;font-size:10.6px;line-height:12px;color:#000;left:329.52px;transform-origin:100% 50%;transform:scaleX(0.9863);-webkit-text-stroke:0.22px #000;">16.464.977</span>
<span style="top:574px;font-size:10.6px;line-height:12px;color:#000;left:434.52px;transform-origin:100% 50%;transform:scaleX(0.9863);-webkit-text-stroke:0.22px #000;">16.464.977</span>
<span style="top:589px;font-size:10.3px;line-height:11px;color:#000;left:99.65px;transform-origin:0 50%;transform:scaleX(1.0084);-webkit-text-stroke:0.22px #000;">Biaya Pemeliharaan</span>
<span style="top:589px;font-size:10.6px;line-height:12px;color:#000;left:335.41px;transform-origin:100% 50%;transform:scaleX(0.9823);-webkit-text-stroke:0.22px #000;">1.250.000</span>
<span style="top:589px;font-size:10.6px;line-height:12px;color:#000;left:440.41px;transform-origin:100% 50%;transform:scaleX(0.9823);-webkit-text-stroke:0.22px #000;">1.250.000</span>
<span style="top:604px;font-size:10.3px;line-height:11px;color:#000;left:99.65px;transform-origin:0 50%;transform:scaleX(1.0079);-webkit-text-stroke:0.22px #000;">Biaya Kantor</span>
<span style="top:604px;font-size:10.6px;line-height:12px;color:#000;left:329.52px;transform-origin:100% 50%;transform:scaleX(0.9863);-webkit-text-stroke:0.22px #000;">17.026.400</span>
<span style="top:604px;font-size:10.6px;line-height:12px;color:#000;left:434.52px;transform-origin:100% 50%;transform:scaleX(0.9863);-webkit-text-stroke:0.22px #000;">17.026.400</span>
<span style="top:619px;font-size:10.3px;line-height:11px;color:#000;left:99.65px;transform-origin:0 50%;transform:scaleX(1.0250);-webkit-text-stroke:0.22px #000;">Biaya Tenaga Ahli</span>
<span style="top:619px;font-size:10.6px;line-height:12px;color:#000;left:335.41px;transform-origin:100% 50%;transform:scaleX(1.0225);-webkit-text-stroke:0.22px #000;">7.400.000</span>
<span style="top:619px;font-size:10.6px;line-height:12px;color:#000;left:440.41px;transform-origin:100% 50%;transform:scaleX(1.0225);-webkit-text-stroke:0.22px #000;">7.400.000</span>
<span style="top:634px;font-size:10.3px;line-height:11px;color:#000;left:99.65px;transform-origin:0 50%;transform:scaleX(0.9961);-webkit-text-stroke:0.22px #000;">Biaya Sewa Kantor</span>
<span style="top:634px;font-size:10.6px;line-height:12px;color:#000;left:335.41px;transform-origin:100% 50%;transform:scaleX(1.0225);-webkit-text-stroke:0.22px #000;">5.500.000</span>
<span style="top:634px;font-size:10.6px;line-height:12px;color:#000;left:440.41px;transform-origin:100% 50%;transform:scaleX(1.0225);-webkit-text-stroke:0.22px #000;">5.500.000</span>
<span style="top:649px;font-size:10.3px;line-height:11px;color:#000;left:99.65px;transform-origin:0 50%;transform:scaleX(1.0210);-webkit-text-stroke:0.22px #000;">Biaya Sumbangan</span>
<span style="top:649px;font-size:10.6px;line-height:12px;color:#000;left:329.52px;transform-origin:100% 50%;transform:scaleX(0.9863);-webkit-text-stroke:0.22px #000;">12.550.000</span>
<span style="top:665px;font-size:10.3px;line-height:11px;color:#000;left:112.05px;transform-origin:0 50%;transform:scaleX(0.9869);-webkit-text-stroke:0.22px #000;">TOTAL BIAYA OPERASIONAL</span>
<span class="b" style="top:664px;font-size:10.7px;line-height:12px;color:#000;left:322.25px;transform-origin:100% 50%;transform:scaleX(1.1330);">290.131.358</span>
<span style="top:664px;font-size:10.6px;line-height:12px;color:#000;left:428.63px;transform-origin:100% 50%;transform:scaleX(0.9861);-webkit-text-stroke:0.22px #000;">284.631.358</span>
<span class="b" style="top:683px;font-size:11px;line-height:12px;color:#000;left:124.65px;transform-origin:0 50%;transform:scaleX(1.0333);">LABA USAHA</span>
<span class="b" style="top:683px;font-size:10.7px;line-height:12px;color:#000;left:313.34px;transform-origin:100% 50%;transform:scaleX(1.1739);">1.835.794.889</span>
<span class="b" style="top:705px;font-size:11px;line-height:12px;color:#000;left:86.55px;transform-origin:0 50%;transform:scaleX(1.0725);">PENDAPATAN/(BIAYA) LAIN-LAIN</span>
<span style="top:725px;font-size:10.3px;line-height:11px;color:#000;left:99.65px;transform-origin:0 50%;transform:scaleX(1.0122);-webkit-text-stroke:0.22px #000;">PENDAPATAN LAIN-LAIN</span>
<span style="top:741px;font-size:10.3px;line-height:11px;color:#000;left:99.65px;transform-origin:0 50%;transform:scaleX(0.9836);-webkit-text-stroke:0.22px #000;">PENDAPATAN BUNGA DEPOSITO</span>
<span style="top:757px;font-size:10.3px;line-height:11px;color:#000;left:99.65px;transform-origin:0 50%;transform:scaleX(0.9631);-webkit-text-stroke:0.22px #000;">BIAYA ADM, BUKU CEK &amp; GIRO</span>
<span style="top:773px;font-size:10.3px;line-height:11px;color:#000;left:99.65px;transform-origin:0 50%;transform:scaleX(0.9951);-webkit-text-stroke:0.22px #000;">PAJAK JASA GIRO</span>
<span style="top:756px;font-size:10.6px;line-height:12px;color:#000;left:344.24px;transform-origin:100% 50%;transform:scaleX(1.0312);-webkit-text-stroke:0.22px #000;">646.500</span>
<span style="top:756px;font-size:10.6px;line-height:12px;color:#000;left:449.24px;transform-origin:100% 50%;transform:scaleX(1.0312);-webkit-text-stroke:0.22px #000;">646.500</span>
<span style="top:788px;font-size:10.6px;line-height:12px;color:#000;left:344.24px;transform-origin:100% 50%;transform:scaleX(1.0312);-webkit-text-stroke:0.22px #000;">646.500</span>
<span style="top:788px;font-size:10.6px;line-height:12px;color:#000;left:449.24px;transform-origin:100% 50%;transform:scaleX(1.0312);-webkit-text-stroke:0.22px #000;">646.500</span>
<span class="b" style="top:820px;font-size:11px;line-height:12px;color:#000;left:124.65px;transform-origin:0 50%;transform:scaleX(1.0302);">LABA BERSIH</span>
<span class="b" style="top:820px;font-size:10.7px;line-height:12px;color:#000;left:313.34px;transform-origin:100% 50%;transform:scaleX(1.1462);">1.835.148.389</span>
<span style="top:986px;font-size:14.3px;line-height:16px;color:#f0f0f0;left:124.89px;transform-origin:0 50%;transform:scaleX(0.9595);">Data Penjualan</span>
<span style="top:986px;font-size:14.3px;line-height:16px;color:#f0f0f0;left:244.89px;transform-origin:0 50%;transform:scaleX(0.9638);">Rekening Koran</span>
<span style="top:986px;font-size:14.3px;line-height:16px;color:#f0f0f0;left:370.85px;transform-origin:0 50%;transform:scaleX(0.9281);">Sheet5</span>
<span style="top:986px;font-size:14.3px;line-height:16px;color:#f0f0f0;left:438.63px;transform-origin:0 50%;transform:scaleX(0.9192);">Rekap RK</span>
<span style="top:986px;font-size:14.3px;line-height:16px;color:#f0f0f0;left:525.55px;transform-origin:0 50%;transform:scaleX(0.9775);">summary tahunan</span>
<span style="top:986px;font-size:14.3px;line-height:16px;color:#0a5426;left:663.62px;transform-origin:0 50%;transform:scaleX(0.9317);">PP 23</span>
<span style="top:986px;font-size:14.3px;line-height:16px;color:#fff;left:723.59px;transform-origin:0 50%;transform:scaleX(0.9579);">NRC</span>
<span style="top:983px;font-size:14.3px;line-height:16px;color:#3a1414;left:776.61px;transform-origin:0 50%;transform:scaleX(0.9392);">RUGILABA</span>
<span style="top:986px;font-size:14.3px;line-height:16px;color:#f0f0f0;left:870.05px;transform-origin:0 50%;transform:scaleX(0.9248);">TB</span>
<span style="top:986px;font-size:14.3px;line-height:16px;color:#f0f0f0;left:910.55px;transform-origin:0 50%;transform:scaleX(0.8839);">GL</span>
<span style="top:986px;font-size:14.3px;line-height:16px;color:#f0f0f0;left:953.15px;transform-origin:0 50%;transform:scaleX(0.8967);">LR</span>
<span style="top:986px;font-size:14.3px;line-height:16px;color:#f0f0f0;left:993.65px;transform-origin:0 50%;transform:scaleX(0.9044);">NERACA</span>
<span style="top:1014px;font-size:12.4px;line-height:14px;color:#e8e8e8;left:9.96px;transform-origin:0 50%;transform:scaleX(0.8871);">Ready</span>
<span class="b" style="top:1014px;font-size:12.4px;line-height:14px;color:#f0f0f0;left:80.05px;transform-origin:0 50%;transform:scaleX(0.8544);">Accessibility: Investigate</span>
<span style="top:1015px;font-size:12.4px;line-height:14px;color:#e8e8e8;left:1890.55px;transform-origin:0 50%;transform:scaleX(0.8837);">85%</span>
<span style="top:1040px;font-size:12.8px;line-height:15px;color:#fff;left:48.56px;transform-origin:0 50%;transform:scaleX(0.9851);">Hujan datang</span>
<span style="top:1056px;font-size:12.8px;line-height:15px;color:#c2cacc;left:48.58px;transform-origin:0 50%;transform:scaleX(0.9697);">Di sekitar 2 jam</span>
<span style="top:1048px;font-size:14px;line-height:16px;color:#e4e4e4;left:601.55px;transform-origin:0 50%;transform:scaleX(0.9616);">Search</span>
<span style="top:1040px;font-size:12.8px;line-height:15px;color:#fff;left:1845.54px;transform-origin:100% 50%;transform:scaleX(0.9371);">09:40</span>
<span style="top:1056px;font-size:12.8px;line-height:15px;color:#fff;left:1813.52px;transform-origin:100% 50%;transform:scaleX(0.9761);">31/01/2026</span>
</div></body></html>
